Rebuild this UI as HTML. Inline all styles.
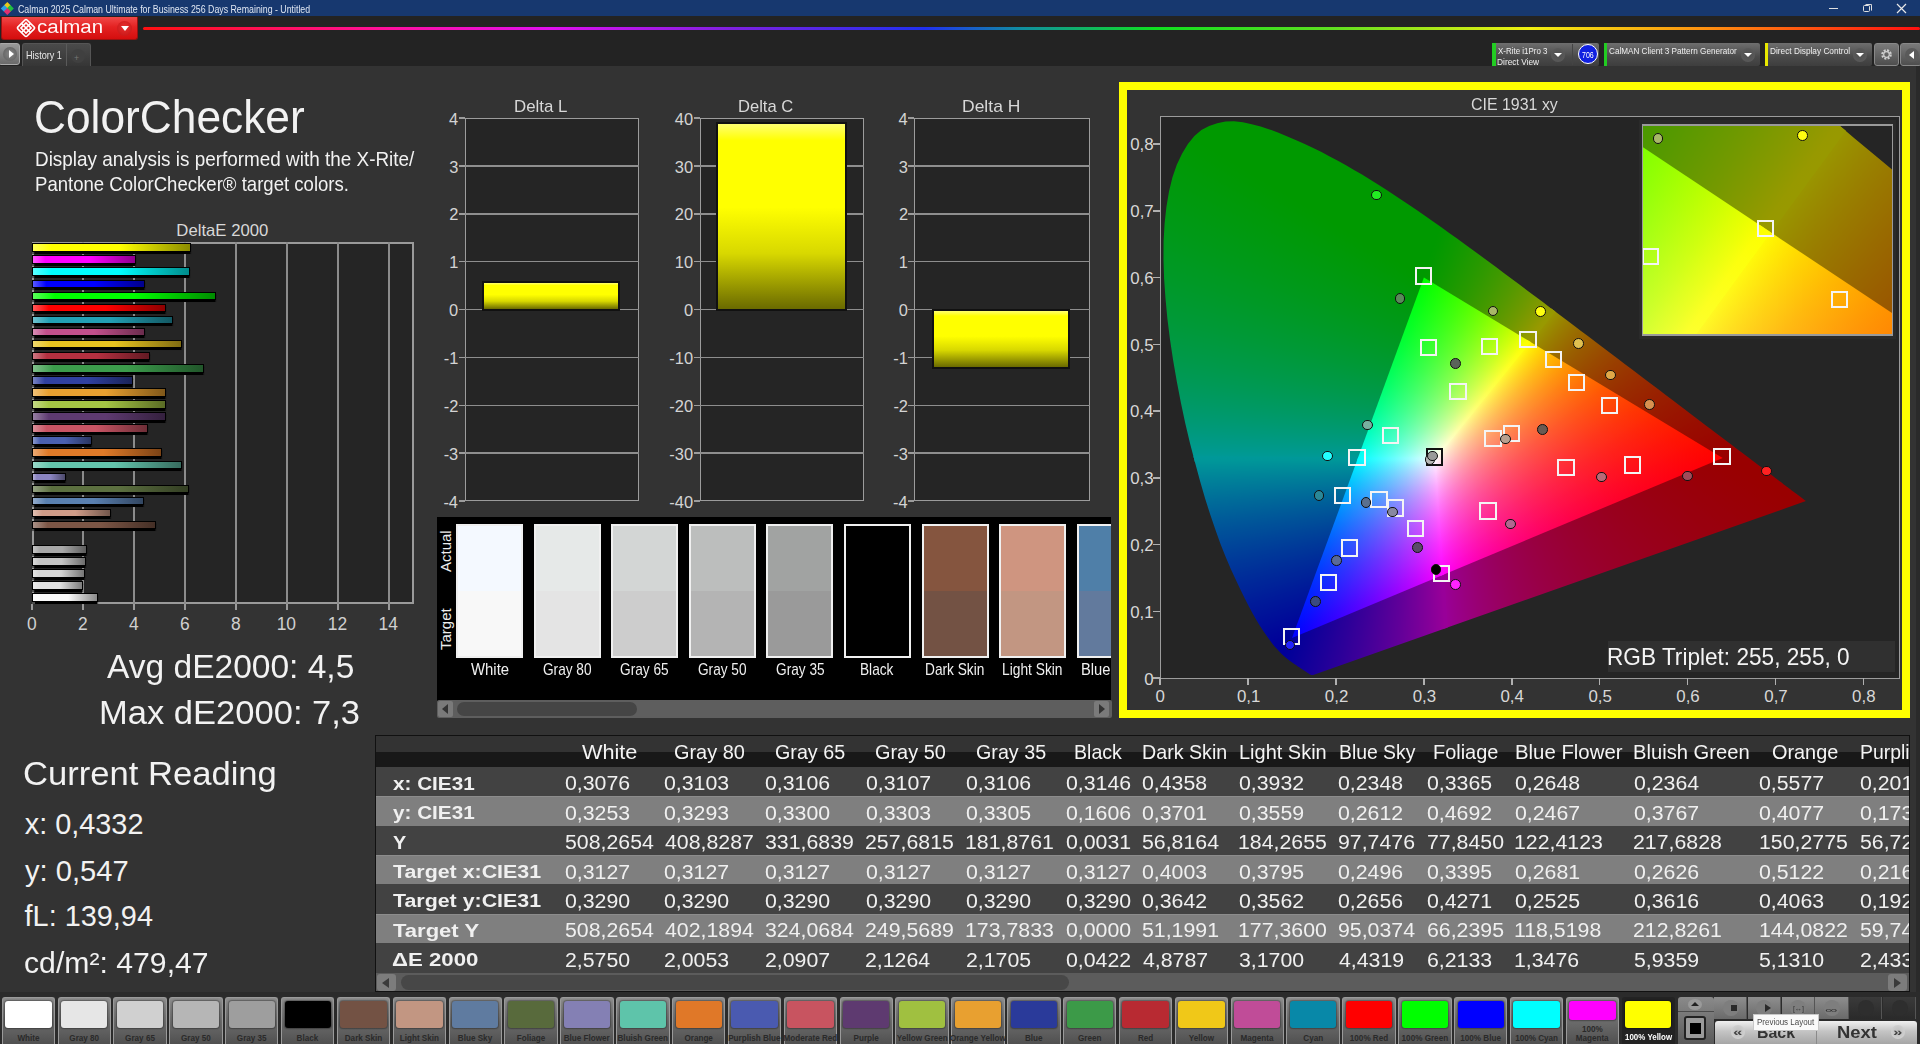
<!DOCTYPE html><html><head><meta charset="utf-8"><style>
*{margin:0;padding:0;box-sizing:border-box}
html,body{width:1920px;height:1044px;overflow:hidden;background:#333;font-family:"Liberation Sans",sans-serif}
.t{position:absolute;white-space:nowrap;line-height:1;transform-origin:0 0}
.a{position:absolute}
</style></head><body><div style="position:absolute;left:0px;top:0px;width:1920px;height:17px;background:#15386e"></div>
<div style="position:absolute;left:0px;top:16px;width:1920px;height:50px;background:#232323"></div>
<div style="position:absolute;left:0px;top:0px;width:1920px;height:16.3px;background:#17386f"></div>
<div class="a" style="left:1px;top:2px;width:12px;height:12px"><div class="a" style="left:3.7px;top:0.5px;width:4.6px;height:4.6px;background:#e8c81a;transform:rotate(45deg)"></div><div class="a" style="left:0.5px;top:3.7px;width:4.6px;height:4.6px;background:#2aa0e8;transform:rotate(45deg)"></div><div class="a" style="left:6.9px;top:3.7px;width:4.6px;height:4.6px;background:#20c040;transform:rotate(45deg)"></div><div class="a" style="left:3.7px;top:6.9px;width:4.6px;height:4.6px;background:#e03070;transform:rotate(45deg)"></div></div>
<div class="t" style="left:17.56px;top:4.61px;font-size:10.03px;color:#dfe6f2;transform:scaleX(0.8776);">Calman 2025 Calman Ultimate for Business 256 Days Remaining  - Untitled</div>
<div style="position:absolute;left:1829px;top:8px;width:9px;height:1px;background:#e0e0e0"></div>
<div style="position:absolute;left:1863px;top:5px;width:7px;height:7px;border:1px solid #e0e0e0;border-radius:1.5px"></div>
<div style="position:absolute;left:1865px;top:3.5px;width:7px;height:7px;border-top:1px solid #e0e0e0;border-right:1px solid #e0e0e0;border-radius:1.5px"></div>
<svg class="a" style="left:1896px;top:3px" width="11" height="11"><path d="M1 1L10 10M10 1L1 10" stroke="#e8e8e8" stroke-width="1.2"/></svg>
<div class="a" style="left:0.5px;top:16.7px;width:137px;height:23px;border-radius:0 0 3px 3px;background:linear-gradient(#f04848,#e42222 45%,#d40e0e);border:1px solid #9a1010;border-top:none"></div>
<svg class="a" style="left:16px;top:18px" width="20" height="20" viewBox="0 0 20 20"><g transform="rotate(45 10 10)" fill="none" stroke="#fff" stroke-width="1.6"><rect x="3.6" y="3.6" width="12.8" height="12.8" rx="1.5"/><rect x="6.4" y="6.4" width="7.2" height="7.2"/><line x1="10" y1="3.6" x2="10" y2="16.4"/><line x1="3.6" y1="10" x2="16.4" y2="10"/></g></svg>
<div class="t" style="left:36.68px;top:17.26px;font-size:19.19px;color:#fff8f8;transform:scaleX(1.0674);">calman</div>
<div class="a" style="left:117px;top:21px;width:15px;height:15px;border-radius:50%;background:radial-gradient(circle at 50% 40%,#e83030,#c21212)"></div>
<div class="a" style="left:120.5px;top:26px;width:0;height:0;border-left:4px solid transparent;border-right:4px solid transparent;border-top:5px solid #fff"></div>
<div class="a" style="left:143px;top:26.5px;width:1777px;height:3.6px;border-radius:2px;background:linear-gradient(to right,#ff1010 0,#ff10a0 14%,#e010f0 23%,#8020e0 33%,#2030f0 44%,#1090a0 49.5%,#10e020 57%,#60e020 67%,#f0f010 78%,#ff9010 88%,#ff1010 100%)"></div>
<div class="a" style="left:-2px;top:43px;width:22px;height:22px;border-radius:3px;background:linear-gradient(#9a9a9a,#6a6a6a);border:1px solid #aaa"></div>
<div class="a" style="left:3px;top:46.5px;width:14px;height:14px;border-radius:50%;background:radial-gradient(#888,#5a5a5a)"></div>
<div class="a" style="left:8.5px;top:49.5px;width:0;height:0;border-top:4px solid transparent;border-bottom:4px solid transparent;border-left:5px solid #fff"></div>
<div class="a" style="left:22px;top:43px;width:69px;height:23px;border-radius:3px 3px 0 0;background:linear-gradient(#4a4a4a,#363636);border:1px solid #555;border-bottom:none"></div>
<div style="position:absolute;left:65.5px;top:44px;width:1px;height:22px;background:#5a5a5a"></div>
<div class="t" style="left:25.97px;top:51.16px;font-size:10.03px;color:#e8e8e8;transform:scaleX(0.9084);">History 1</div>
<div class="a" style="left:71px;top:49px;width:14px;height:14px;border-radius:50%;background:#404040"></div>
<div class="t" style="left:74.06px;top:54.02px;font-size:8.72px;color:#777;">+</div>
<div class="a" style="left:1492px;top:43.3px;width:107px;height:22.5px;border-radius:2px;background:linear-gradient(#6e6e6e,#4a4a4a 60%,#3e3e3e)"></div>
<div style="position:absolute;left:1492px;top:43.3px;width:3.5px;height:22.5px;background:#22cc22"></div>
<div class="t" style="left:1497.80px;top:46.28px;font-size:9.59px;color:#f0f0f0;transform:scaleX(0.8292);">X-Rite i1Pro 3</div>
<div class="t" style="left:1497.33px;top:56.58px;font-size:9.59px;color:#f0f0f0;transform:scaleX(0.8722);">Direct View</div>
<div class="a" style="left:1551px;top:48px;width:14px;height:14px;border-radius:50%;background:radial-gradient(#4e4e4e,#5e5e5e)"></div>
<div class="a" style="left:1554px;top:53px;width:0;height:0;border-left:4px solid transparent;border-right:4px solid transparent;border-top:4.5px solid #fff"></div>
<div style="position:absolute;left:1572px;top:44px;width:1px;height:21px;background:#444"></div>
<div class="a" style="left:1577.5px;top:44px;width:20px;height:20px;border-radius:50%;background:#1020e0;border:1.2px solid #fff"></div>
<div class="t" style="left:1581.65px;top:50.72px;font-size:8.72px;color:#fff;transform:scaleX(0.8008);">706</div>
<div class="a" style="left:1603.7px;top:43.3px;width:156.29999999999995px;height:22.5px;border-radius:2px;background:linear-gradient(#6e6e6e,#4a4a4a 60%,#3e3e3e)"></div>
<div style="position:absolute;left:1603.7px;top:43.3px;width:3.5px;height:22.5px;background:#22cc22"></div>
<div class="t" style="left:1609.29px;top:46.28px;font-size:9.59px;color:#f0f0f0;transform:scaleX(0.8514);">CalMAN Client 3 Pattern Generator</div>
<div class="a" style="left:1741px;top:48px;width:14px;height:14px;border-radius:50%;background:radial-gradient(#4e4e4e,#5e5e5e)"></div>
<div class="a" style="left:1744px;top:53px;width:0;height:0;border-left:4px solid transparent;border-right:4px solid transparent;border-top:4.5px solid #fff"></div>
<div class="a" style="left:1764.6px;top:43.3px;width:107.20000000000005px;height:22.5px;border-radius:2px;background:linear-gradient(#6e6e6e,#4a4a4a 60%,#3e3e3e)"></div>
<div style="position:absolute;left:1764.6px;top:43.3px;width:3.5px;height:22.5px;background:#e8e800"></div>
<div class="t" style="left:1769.94px;top:46.28px;font-size:9.59px;color:#f0f0f0;transform:scaleX(0.8646);">Direct Display Control</div>
<div class="a" style="left:1853px;top:48px;width:14px;height:14px;border-radius:50%;background:radial-gradient(#4e4e4e,#5e5e5e)"></div>
<div class="a" style="left:1856px;top:53px;width:0;height:0;border-left:4px solid transparent;border-right:4px solid transparent;border-top:4.5px solid #fff"></div>
<div class="a" style="left:1874px;top:43.3px;width:25px;height:22.5px;border-radius:3px;background:linear-gradient(#7a7a7a,#4e4e4e);border:1px solid #888"></div>
<svg class="a" style="left:1879px;top:47px" width="15" height="15" viewBox="0 0 15 15"><circle cx="7.5" cy="7.5" r="4.2" fill="none" stroke="#cfcfcf" stroke-width="2.2" stroke-dasharray="2 1.3"/><circle cx="7.5" cy="7.5" r="2.8" fill="none" stroke="#cfcfcf" stroke-width="1.2"/></svg>
<div class="a" style="left:1900px;top:43.3px;width:22px;height:22.5px;border-radius:3px;background:linear-gradient(#7a7a7a,#4e4e4e);border:1px solid #888"></div>
<div class="a" style="left:1905px;top:47.5px;width:14px;height:14px;border-radius:50%;background:#5a5a5a"></div>
<div class="a" style="left:1909px;top:50.5px;width:0;height:0;border-top:4px solid transparent;border-bottom:4px solid transparent;border-right:5px solid #fff"></div>
<div style="position:absolute;left:0px;top:66px;width:1920px;height:928px;background:#333"></div>
<div class="t" style="left:33.79px;top:93.83px;font-size:46.51px;color:#f2f2f2;transform:scaleX(0.9524);">ColorChecker</div>
<div class="t" style="left:35.49px;top:150.21px;font-size:19.48px;color:#f2f2f2;transform:scaleX(0.9711);">Display analysis is performed with the X-Rite/</div>
<div class="t" style="left:34.51px;top:174.91px;font-size:19.48px;color:#f2f2f2;transform:scaleX(0.9536);">Pantone ColorChecker® target colors.</div>
<div class="t" style="left:176.36px;top:223.05px;font-size:16.72px;color:#d8d8d8;">DeltaE 2000</div>
<div style="position:absolute;left:32px;top:242px;width:382px;height:362px;background:#252525;border:2px solid #9a9a9a;border-bottom:2px solid #9a9a9a"></div>
<div style="position:absolute;left:82px;top:242px;width:2px;height:362px;background:#8c8c8c"></div>
<div style="position:absolute;left:133px;top:242px;width:2px;height:362px;background:#8c8c8c"></div>
<div style="position:absolute;left:184px;top:242px;width:2px;height:362px;background:#8c8c8c"></div>
<div style="position:absolute;left:235px;top:242px;width:2px;height:362px;background:#8c8c8c"></div>
<div style="position:absolute;left:286px;top:242px;width:2px;height:362px;background:#8c8c8c"></div>
<div style="position:absolute;left:337px;top:242px;width:2px;height:362px;background:#8c8c8c"></div>
<div style="position:absolute;left:388px;top:242px;width:2px;height:362px;background:#8c8c8c"></div>
<div style="position:absolute;left:31px;top:604px;width:2px;height:6px;background:#9a9a9a"></div>
<div class="t" style="left:27.12px;top:615.65px;font-size:17.43px;color:#d0d0d0;">0</div>
<div style="position:absolute;left:82px;top:604px;width:2px;height:6px;background:#9a9a9a"></div>
<div class="t" style="left:78.10px;top:615.65px;font-size:17.43px;color:#d0d0d0;">2</div>
<div style="position:absolute;left:133px;top:604px;width:2px;height:6px;background:#9a9a9a"></div>
<div class="t" style="left:129.09px;top:615.65px;font-size:17.43px;color:#d0d0d0;">4</div>
<div style="position:absolute;left:184px;top:604px;width:2px;height:6px;background:#9a9a9a"></div>
<div class="t" style="left:179.90px;top:615.65px;font-size:17.43px;color:#d0d0d0;">6</div>
<div style="position:absolute;left:235px;top:604px;width:2px;height:6px;background:#9a9a9a"></div>
<div class="t" style="left:230.92px;top:615.65px;font-size:17.43px;color:#d0d0d0;">8</div>
<div style="position:absolute;left:286px;top:604px;width:2px;height:6px;background:#9a9a9a"></div>
<div class="t" style="left:276.68px;top:615.65px;font-size:17.43px;color:#d0d0d0;">10</div>
<div style="position:absolute;left:337px;top:604px;width:2px;height:6px;background:#9a9a9a"></div>
<div class="t" style="left:327.75px;top:615.65px;font-size:17.43px;color:#d0d0d0;">12</div>
<div style="position:absolute;left:388px;top:604px;width:2px;height:6px;background:#9a9a9a"></div>
<div class="t" style="left:378.47px;top:615.65px;font-size:17.43px;color:#d0d0d0;">14</div>
<div class="a" style="left:32px;top:243.30px;width:159.4px;height:8.5px;border:1px solid #000;background:linear-gradient(to right,#ffff59,#ffff00 12%,#ffff00 55%,#8c8c00);box-shadow:0 1.5px 1px #000"></div>
<div class="a" style="left:32px;top:255.37px;width:104.2px;height:8.5px;border:1px solid #000;background:linear-gradient(to right,#ff59ff,#ff00ff 12%,#ff00ff 55%,#8c008c);box-shadow:0 1.5px 1px #000"></div>
<div class="a" style="left:32px;top:267.44px;width:157.9px;height:8.5px;border:1px solid #000;background:linear-gradient(to right,#59ffff,#00ffff 12%,#00ffff 55%,#008c8c);box-shadow:0 1.5px 1px #000"></div>
<div class="a" style="left:32px;top:279.51px;width:113.3px;height:8.5px;border:1px solid #000;background:linear-gradient(to right,#5959ff,#0000ff 12%,#0000ff 55%,#00008c);box-shadow:0 1.5px 1px #000"></div>
<div class="a" style="left:32px;top:291.58px;width:184.4px;height:8.5px;border:1px solid #000;background:linear-gradient(to right,#59ff59,#00ff00 12%,#00ff00 55%,#008c00);box-shadow:0 1.5px 1px #000"></div>
<div class="a" style="left:32px;top:303.65px;width:133.5px;height:8.5px;border:1px solid #000;background:linear-gradient(to right,#ff5959,#ff0000 12%,#ff0000 55%,#8c0000);box-shadow:0 1.5px 1px #000"></div>
<div class="a" style="left:32px;top:315.72px;width:141.4px;height:8.5px;border:1px solid #000;background:linear-gradient(to right,#6fc1ce,#22a0b4 12%,#22a0b4 55%,#135863);box-shadow:0 1.5px 1px #000"></div>
<div class="a" style="left:32px;top:327.79px;width:113.3px;height:8.5px;border:1px solid #000;background:linear-gradient(to right,#d78db4,#c2508c 12%,#c2508c 55%,#6b2c4d);box-shadow:0 1.5px 1px #000"></div>
<div class="a" style="left:32px;top:339.86px;width:150.3px;height:8.5px;border:1px solid #000;background:linear-gradient(to right,#f0d96e,#e8c420 12%,#e8c420 55%,#806c12);box-shadow:0 1.5px 1px #000"></div>
<div class="a" style="left:32px;top:351.93px;width:118.4px;height:8.5px;border:1px solid #000;background:linear-gradient(to right,#ce7883,#b43040 12%,#b43040 55%,#631a23);box-shadow:0 1.5px 1px #000"></div>
<div class="a" style="left:32px;top:364.00px;width:172.4px;height:8.5px;border:1px solid #000;background:linear-gradient(to right,#80bf8b,#3c9c4c 12%,#3c9c4c 55%,#21562a);box-shadow:0 1.5px 1px #000"></div>
<div class="a" style="left:32px;top:376.07px;width:100.6px;height:8.5px;border:1px solid #000;background:linear-gradient(to right,#7883c1,#3040a0 12%,#3040a0 55%,#1a2358);box-shadow:0 1.5px 1px #000"></div>
<div class="a" style="left:32px;top:388.14px;width:133.7px;height:8.5px;border:1px solid #000;background:linear-gradient(to right,#f0c178,#e8a030 12%,#e8a030 55%,#80581a);box-shadow:0 1.5px 1px #000"></div>
<div class="a" style="left:32px;top:400.21px;width:133.7px;height:8.5px;border:1px solid #000;background:linear-gradient(to right,#c4d985,#a4c444 12%,#a4c444 55%,#5a6c25);box-shadow:0 1.5px 1px #000"></div>
<div class="a" style="left:32px;top:412.28px;width:134.0px;height:8.5px;border:1px solid #000;background:linear-gradient(to right,#967fa2,#5e3a70 12%,#5e3a70 55%,#34203e);box-shadow:0 1.5px 1px #000"></div>
<div class="a" style="left:32px;top:424.35px;width:116.4px;height:8.5px;border:1px solid #000;background:linear-gradient(to right,#db909a,#c85464 12%,#c85464 55%,#6e2e37);box-shadow:0 1.5px 1px #000"></div>
<div class="a" style="left:32px;top:436.42px;width:60.4px;height:8.5px;border:1px solid #000;background:linear-gradient(to right,#8998cc,#4a60b0 12%,#4a60b0 55%,#293561);box-shadow:0 1.5px 1px #000"></div>
<div class="a" style="left:32px;top:448.49px;width:130.4px;height:8.5px;border:1px solid #000;background:linear-gradient(to right,#eba973,#e07a28 12%,#e07a28 55%,#7b4316);box-shadow:0 1.5px 1px #000"></div>
<div class="a" style="left:32px;top:460.56px;width:150.3px;height:8.5px;border:1px solid #000;background:linear-gradient(to right,#9ad9c9,#64c4ac 12%,#64c4ac 55%,#376c5f);box-shadow:0 1.5px 1px #000"></div>
<div class="a" style="left:32px;top:472.63px;width:34.1px;height:8.5px;border:1px solid #000;background:linear-gradient(to right,#b3afd6,#8a84c0 12%,#8a84c0 55%,#4c496a);box-shadow:0 1.5px 1px #000"></div>
<div class="a" style="left:32px;top:484.70px;width:156.6px;height:8.5px;border:1px solid #000;background:linear-gradient(to right,#95a283,#5c7040 12%,#5c7040 55%,#333e23);box-shadow:0 1.5px 1px #000"></div>
<div class="a" style="left:32px;top:496.77px;width:111.8px;height:8.5px;border:1px solid #000;background:linear-gradient(to right,#94accc,#5a80b0 12%,#5a80b0 55%,#324661);box-shadow:0 1.5px 1px #000"></div>
<div class="a" style="left:32px;top:508.84px;width:79.0px;height:8.5px;border:1px solid #000;background:linear-gradient(to right,#e0bfb2,#d09c88 12%,#d09c88 55%,#72564b);box-shadow:0 1.5px 1px #000"></div>
<div class="a" style="left:32px;top:520.91px;width:124.3px;height:8.5px;border:1px solid #000;background:linear-gradient(to right,#aa9187,#7c5646 12%,#7c5646 55%,#442f26);box-shadow:0 1.5px 1px #000"></div>
<div class="a" style="left:32px;top:545.05px;width:55.3px;height:8.5px;border:1px solid #000;background:linear-gradient(to right,#c6c6c6,#a8a8a8 12%,#a8a8a8 55%,#5c5c5c);box-shadow:0 1.5px 1px #000"></div>
<div class="a" style="left:32px;top:557.12px;width:54.3px;height:8.5px;border:1px solid #000;background:linear-gradient(to right,#d9d9d9,#c4c4c4 12%,#c4c4c4 55%,#6c6c6c);box-shadow:0 1.5px 1px #000"></div>
<div class="a" style="left:32px;top:569.19px;width:53.2px;height:8.5px;border:1px solid #000;background:linear-gradient(to right,#e3e3e3,#d4d4d4 12%,#d4d4d4 55%,#757575);box-shadow:0 1.5px 1px #000"></div>
<div class="a" style="left:32px;top:581.26px;width:51.2px;height:8.5px;border:1px solid #000;background:linear-gradient(to right,#ececec,#e2e2e2 12%,#e2e2e2 55%,#7c7c7c);box-shadow:0 1.5px 1px #000"></div>
<div class="a" style="left:32px;top:593.33px;width:65.6px;height:8.5px;border:1px solid #000;background:linear-gradient(to right,#fcfcfc,#fafafa 12%,#fafafa 55%,#8a8a8a);box-shadow:0 1.5px 1px #000"></div>
<div class="t" style="left:107.00px;top:649.77px;font-size:32.99px;color:#f2f2f2;transform:scaleX(1.0165);">Avg dE2000: 4,5</div>
<div class="t" style="left:99.24px;top:695.77px;font-size:32.99px;color:#f2f2f2;transform:scaleX(1.0469);">Max dE2000: 7,3</div>
<div class="t" style="left:23.27px;top:757.40px;font-size:33.43px;color:#f2f2f2;transform:scaleX(1.0351);">Current Reading</div>
<div class="t" style="left:24.71px;top:810.17px;font-size:28.86px;color:#f2f2f2;">x: 0,4332</div>
<div class="t" style="left:25.00px;top:856.63px;font-size:29.14px;color:#f2f2f2;">y: 0,547</div>
<div class="t" style="left:24.57px;top:902.27px;font-size:28.86px;color:#f2f2f2;">fL: 139,94</div>
<div class="t" style="left:23.79px;top:949.09px;font-size:28.71px;color:#f2f2f2;transform:scaleX(1.0520);">cd/m²: 479,47</div>
<div style="position:absolute;left:464.6px;top:118px;width:174.0px;height:383px;background:#252525;border:1.5px solid #9c9c9c"></div>
<div style="position:absolute;left:458.6px;top:117.25px;width:6px;height:1.5px;background:#9c9c9c"></div>
<div class="t" style="left:448.89px;top:110.74px;font-size:16.43px;color:#d4d4d4;">4</div>
<div style="position:absolute;left:464.6px;top:165.12px;width:174.0px;height:1.5px;background:#8e8e8e"></div>
<div style="position:absolute;left:458.6px;top:165.12px;width:6px;height:1.5px;background:#9c9c9c"></div>
<div class="t" style="left:449.14px;top:158.62px;font-size:16.43px;color:#d4d4d4;">3</div>
<div style="position:absolute;left:464.6px;top:213.0px;width:174.0px;height:1.5px;background:#8e8e8e"></div>
<div style="position:absolute;left:458.6px;top:213.0px;width:6px;height:1.5px;background:#9c9c9c"></div>
<div class="t" style="left:449.30px;top:206.49px;font-size:16.43px;color:#d4d4d4;">2</div>
<div style="position:absolute;left:464.6px;top:260.88px;width:174.0px;height:1.5px;background:#8e8e8e"></div>
<div style="position:absolute;left:458.6px;top:260.88px;width:6px;height:1.5px;background:#9c9c9c"></div>
<div class="t" style="left:449.22px;top:254.37px;font-size:16.43px;color:#d4d4d4;">1</div>
<div style="position:absolute;left:464.6px;top:308.75px;width:174.0px;height:1.5px;background:#8e8e8e"></div>
<div style="position:absolute;left:458.6px;top:308.75px;width:6px;height:1.5px;background:#9c9c9c"></div>
<div class="t" style="left:449.06px;top:302.24px;font-size:16.43px;color:#d4d4d4;">0</div>
<div style="position:absolute;left:464.6px;top:356.62px;width:174.0px;height:1.5px;background:#8e8e8e"></div>
<div style="position:absolute;left:458.6px;top:356.62px;width:6px;height:1.5px;background:#9c9c9c"></div>
<div class="t" style="left:443.72px;top:350.12px;font-size:16.43px;color:#d4d4d4;">-1</div>
<div style="position:absolute;left:464.6px;top:404.5px;width:174.0px;height:1.5px;background:#8e8e8e"></div>
<div style="position:absolute;left:458.6px;top:404.5px;width:6px;height:1.5px;background:#9c9c9c"></div>
<div class="t" style="left:443.80px;top:397.99px;font-size:16.43px;color:#d4d4d4;">-2</div>
<div style="position:absolute;left:464.6px;top:452.38px;width:174.0px;height:1.5px;background:#8e8e8e"></div>
<div style="position:absolute;left:458.6px;top:452.38px;width:6px;height:1.5px;background:#9c9c9c"></div>
<div class="t" style="left:443.64px;top:445.87px;font-size:16.43px;color:#d4d4d4;">-3</div>
<div style="position:absolute;left:458.6px;top:500.25px;width:6px;height:1.5px;background:#9c9c9c"></div>
<div class="t" style="left:443.39px;top:493.74px;font-size:16.43px;color:#d4d4d4;">-4</div>
<div class="a" style="left:481.5px;top:280.5px;width:138.5px;height:30.5px;border:2px solid #111;background:linear-gradient(to bottom,#ffff70,#ffff00 9%,#ffff00 45%,#d8d800 70%,#6a6a00)"></div>
<div class="t" style="left:514.15px;top:99.37px;font-size:15.99px;color:#d8d8d8;transform:scaleX(1.0544);">Delta L</div>
<div style="position:absolute;left:699.5px;top:118px;width:164.5px;height:383px;background:#252525;border:1.5px solid #9c9c9c"></div>
<div style="position:absolute;left:693.5px;top:117.25px;width:6px;height:1.5px;background:#9c9c9c"></div>
<div class="t" style="left:674.84px;top:110.74px;font-size:16.43px;color:#d4d4d4;">40</div>
<div style="position:absolute;left:699.5px;top:165.12px;width:164.5px;height:1.5px;background:#8e8e8e"></div>
<div style="position:absolute;left:693.5px;top:165.12px;width:6px;height:1.5px;background:#9c9c9c"></div>
<div class="t" style="left:674.84px;top:158.62px;font-size:16.43px;color:#d4d4d4;">30</div>
<div style="position:absolute;left:699.5px;top:213.0px;width:164.5px;height:1.5px;background:#8e8e8e"></div>
<div style="position:absolute;left:693.5px;top:213.0px;width:6px;height:1.5px;background:#9c9c9c"></div>
<div class="t" style="left:674.84px;top:206.49px;font-size:16.43px;color:#d4d4d4;">20</div>
<div style="position:absolute;left:699.5px;top:260.88px;width:164.5px;height:1.5px;background:#8e8e8e"></div>
<div style="position:absolute;left:693.5px;top:260.88px;width:6px;height:1.5px;background:#9c9c9c"></div>
<div class="t" style="left:674.84px;top:254.37px;font-size:16.43px;color:#d4d4d4;">10</div>
<div style="position:absolute;left:699.5px;top:308.75px;width:164.5px;height:1.5px;background:#8e8e8e"></div>
<div style="position:absolute;left:693.5px;top:308.75px;width:6px;height:1.5px;background:#9c9c9c"></div>
<div class="t" style="left:683.96px;top:302.24px;font-size:16.43px;color:#d4d4d4;">0</div>
<div style="position:absolute;left:699.5px;top:356.62px;width:164.5px;height:1.5px;background:#8e8e8e"></div>
<div style="position:absolute;left:693.5px;top:356.62px;width:6px;height:1.5px;background:#9c9c9c"></div>
<div class="t" style="left:669.34px;top:350.12px;font-size:16.43px;color:#d4d4d4;">-10</div>
<div style="position:absolute;left:699.5px;top:404.5px;width:164.5px;height:1.5px;background:#8e8e8e"></div>
<div style="position:absolute;left:693.5px;top:404.5px;width:6px;height:1.5px;background:#9c9c9c"></div>
<div class="t" style="left:669.34px;top:397.99px;font-size:16.43px;color:#d4d4d4;">-20</div>
<div style="position:absolute;left:699.5px;top:452.38px;width:164.5px;height:1.5px;background:#8e8e8e"></div>
<div style="position:absolute;left:693.5px;top:452.38px;width:6px;height:1.5px;background:#9c9c9c"></div>
<div class="t" style="left:669.34px;top:445.87px;font-size:16.43px;color:#d4d4d4;">-30</div>
<div style="position:absolute;left:693.5px;top:500.25px;width:6px;height:1.5px;background:#9c9c9c"></div>
<div class="t" style="left:669.34px;top:493.74px;font-size:16.43px;color:#d4d4d4;">-40</div>
<div class="a" style="left:715.6px;top:121.7px;width:131.10000000000002px;height:189.3px;border:2px solid #111;background:linear-gradient(to bottom,#ffff70,#ffff00 9%,#ffff00 45%,#d8d800 70%,#6a6a00)"></div>
<div class="t" style="left:738.47px;top:99.37px;font-size:15.99px;color:#d8d8d8;transform:scaleX(1.0369);">Delta C</div>
<div style="position:absolute;left:914.2px;top:118px;width:175.5999999999999px;height:383px;background:#252525;border:1.5px solid #9c9c9c"></div>
<div style="position:absolute;left:908.2px;top:117.25px;width:6px;height:1.5px;background:#9c9c9c"></div>
<div class="t" style="left:898.49px;top:110.74px;font-size:16.43px;color:#d4d4d4;">4</div>
<div style="position:absolute;left:914.2px;top:165.12px;width:175.5999999999999px;height:1.5px;background:#8e8e8e"></div>
<div style="position:absolute;left:908.2px;top:165.12px;width:6px;height:1.5px;background:#9c9c9c"></div>
<div class="t" style="left:898.74px;top:158.62px;font-size:16.43px;color:#d4d4d4;">3</div>
<div style="position:absolute;left:914.2px;top:213.0px;width:175.5999999999999px;height:1.5px;background:#8e8e8e"></div>
<div style="position:absolute;left:908.2px;top:213.0px;width:6px;height:1.5px;background:#9c9c9c"></div>
<div class="t" style="left:898.90px;top:206.49px;font-size:16.43px;color:#d4d4d4;">2</div>
<div style="position:absolute;left:914.2px;top:260.88px;width:175.5999999999999px;height:1.5px;background:#8e8e8e"></div>
<div style="position:absolute;left:908.2px;top:260.88px;width:6px;height:1.5px;background:#9c9c9c"></div>
<div class="t" style="left:898.82px;top:254.37px;font-size:16.43px;color:#d4d4d4;">1</div>
<div style="position:absolute;left:914.2px;top:308.75px;width:175.5999999999999px;height:1.5px;background:#8e8e8e"></div>
<div style="position:absolute;left:908.2px;top:308.75px;width:6px;height:1.5px;background:#9c9c9c"></div>
<div class="t" style="left:898.66px;top:302.24px;font-size:16.43px;color:#d4d4d4;">0</div>
<div style="position:absolute;left:914.2px;top:356.62px;width:175.5999999999999px;height:1.5px;background:#8e8e8e"></div>
<div style="position:absolute;left:908.2px;top:356.62px;width:6px;height:1.5px;background:#9c9c9c"></div>
<div class="t" style="left:893.32px;top:350.12px;font-size:16.43px;color:#d4d4d4;">-1</div>
<div style="position:absolute;left:914.2px;top:404.5px;width:175.5999999999999px;height:1.5px;background:#8e8e8e"></div>
<div style="position:absolute;left:908.2px;top:404.5px;width:6px;height:1.5px;background:#9c9c9c"></div>
<div class="t" style="left:893.40px;top:397.99px;font-size:16.43px;color:#d4d4d4;">-2</div>
<div style="position:absolute;left:914.2px;top:452.38px;width:175.5999999999999px;height:1.5px;background:#8e8e8e"></div>
<div style="position:absolute;left:908.2px;top:452.38px;width:6px;height:1.5px;background:#9c9c9c"></div>
<div class="t" style="left:893.24px;top:445.87px;font-size:16.43px;color:#d4d4d4;">-3</div>
<div style="position:absolute;left:908.2px;top:500.25px;width:6px;height:1.5px;background:#9c9c9c"></div>
<div class="t" style="left:892.99px;top:493.74px;font-size:16.43px;color:#d4d4d4;">-4</div>
<div class="a" style="left:931.5px;top:309px;width:138.0px;height:59.5px;border:2px solid #111;background:linear-gradient(to bottom,#ffff70,#ffff00 9%,#ffff00 45%,#d8d800 70%,#6a6a00)"></div>
<div class="t" style="left:962.10px;top:99.37px;font-size:15.99px;color:#d8d8d8;transform:scaleX(1.0950);">Delta H</div>
<div style="position:absolute;left:436.5px;top:516.5px;width:675px;height:184px;background:#000"></div>

<div class="t" style="left:438px;top:572px;font-size:15px;color:#eee;transform:rotate(-90deg);transform-origin:0 0">Actual</div>
<div class="t" style="left:438px;top:650px;font-size:15px;color:#eee;transform:rotate(-90deg);transform-origin:0 0">Target</div>
<div class="a" style="left:455.90px;top:523.7px;width:67px;height:134px;border:2px solid #f0f0f0;background:linear-gradient(#f4f9ff 50%,#f8f8f8 50%)"></div>
<div class="t" style="left:470.63px;top:662.21px;font-size:15.70px;color:#f0f0f0;transform:scaleX(0.9492);">White</div>
<div class="a" style="left:533.52px;top:523.7px;width:67px;height:134px;border:2px solid #f0f0f0;background:linear-gradient(#e6e9e8 50%,#e4e4e4 50%)"></div>
<div class="t" style="left:542.64px;top:662.21px;font-size:15.70px;color:#f0f0f0;transform:scaleX(0.8702);">Gray 80</div>
<div class="a" style="left:611.14px;top:523.7px;width:67px;height:134px;border:2px solid #f0f0f0;background:linear-gradient(#d3d6d5 50%,#cdcdcd 50%)"></div>
<div class="t" style="left:620.26px;top:662.21px;font-size:15.70px;color:#f0f0f0;transform:scaleX(0.8714);">Gray 65</div>
<div class="a" style="left:688.76px;top:523.7px;width:67px;height:134px;border:2px solid #f0f0f0;background:linear-gradient(#bcbebd 50%,#b4b4b4 50%)"></div>
<div class="t" style="left:697.88px;top:662.21px;font-size:15.70px;color:#f0f0f0;transform:scaleX(0.8702);">Gray 50</div>
<div class="a" style="left:766.38px;top:523.7px;width:67px;height:134px;border:2px solid #f0f0f0;background:linear-gradient(#a1a3a2 50%,#9a9a9a 50%)"></div>
<div class="t" style="left:775.50px;top:662.21px;font-size:15.70px;color:#f0f0f0;transform:scaleX(0.8714);">Gray 35</div>
<div class="a" style="left:844.00px;top:523.7px;width:67px;height:134px;border:2px solid #f0f0f0;background:linear-gradient(#000000 50%,#000000 50%)"></div>
<div class="t" style="left:860.26px;top:662.21px;font-size:15.70px;color:#f0f0f0;transform:scaleX(0.8700);">Black</div>
<div class="a" style="left:921.62px;top:523.7px;width:67px;height:134px;border:2px solid #f0f0f0;background:linear-gradient(#85553f 50%,#735244 50%)"></div>
<div class="t" style="left:925.27px;top:662.21px;font-size:15.70px;color:#f0f0f0;transform:scaleX(0.8732);">Dark Skin</div>
<div class="a" style="left:999.24px;top:523.7px;width:67px;height:134px;border:2px solid #f0f0f0;background:linear-gradient(#cf9580 50%,#c29682 50%)"></div>
<div class="t" style="left:1002.34px;top:662.21px;font-size:15.70px;color:#f0f0f0;transform:scaleX(0.8784);">Light Skin</div>
<div class="a" style="left:1076.86px;top:523.7px;width:67px;height:134px;border:2px solid #f0f0f0;background:linear-gradient(#4f7fa8 50%,#627a9d 50%)"></div>
<div class="t" style="left:1080.68px;top:662.21px;font-size:15.70px;color:#f0f0f0;transform:scaleX(0.9395);">Blue Sky</div>
<div style="position:absolute;left:1111px;top:516.5px;width:8px;height:184px;background:#333"></div>
<div style="position:absolute;left:436.5px;top:699.5px;width:675px;height:18.5px;background:#5e5e5e;border-radius:2px"></div>
<div style="position:absolute;left:457px;top:701.5px;width:180px;height:14px;background:#454545;border-radius:7px"></div>
<div style="position:absolute;left:438px;top:701px;width:15px;height:15.5px;background:#7a7a7a;border-radius:2px"></div>
<div class="a" style="left:442px;top:704px;width:0;height:0;border-top:5px solid transparent;border-bottom:5px solid transparent;border-right:6px solid #333"></div>
<div style="position:absolute;left:1094px;top:701px;width:15px;height:15.5px;background:#7a7a7a;border-radius:2px"></div>
<div class="a" style="left:1099px;top:704px;width:0;height:0;border-top:5px solid transparent;border-bottom:5px solid transparent;border-left:6px solid #333"></div>
<div style="position:absolute;left:1119px;top:82px;width:791px;height:636px;background:#ffff00"></div>
<div style="position:absolute;left:1127px;top:90px;width:775px;height:620px;background:#333"></div>
<div class="t" style="left:1470.80px;top:97.23px;font-size:16.86px;color:#d8d8d8;transform:scaleX(0.9454);">CIE 1931 xy</div>
<div style="position:absolute;left:1159.5px;top:115.5px;width:740px;height:563px;background:#252525;border:1.5px solid #9c9c9c"></div>
<div class="a" style="left:1160px;top:116px;width:738px;height:561px;overflow:hidden"><div class="a" style="left:0;top:0;width:740px;height:563px;background:conic-gradient(from 37.175deg at 132.04px 522.14px,#ffffff 0.00deg,#ffffff 0.74deg,#fffcff 1.48deg,#ffedff 2.22deg,#ffdfff 2.96deg,#ffd2ff 3.70deg,#ffc6ff 4.45deg,#ffbbff 5.19deg,#ffb0ff 5.93deg,#ffa6ff 6.67deg,#ff9cff 7.41deg,#ff93ff 8.15deg,#ff8bff 8.89deg,#ff83ff 9.63deg,#ff7bff 10.37deg,#ff74ff 11.11deg,#ff6dff 11.85deg,#ff66ff 12.59deg,#ff60ff 13.34deg,#ff5aff 14.08deg,#ff54ff 14.82deg,#ff4eff 15.56deg,#ff49ff 16.30deg,#ff44ff 17.04deg,#ff3fff 17.78deg,#ff3aff 18.52deg,#ff35ff 19.26deg,#ff31ff 20.00deg,#ff2dff 20.74deg,#ff28ff 21.49deg,#ff24ff 22.23deg,#ff20ff 22.97deg,#ff1dff 23.71deg,#ff19ff 24.45deg,#ff15ff 25.19deg,#ff12ff 25.93deg,#ff0fff 26.67deg,#ff0bff 27.41deg,#ff08ff 28.15deg,#ff05ff 28.89deg,#ff02ff 29.63deg,#ff00ff 30.38deg,#ff00ff 50.38deg,#ff00ff 360deg),conic-gradient(from 102.591deg at 263.87px 161.64px,#ffff00 0.00deg,#ffff00 18.63deg,#ffff02 19.38deg,#ffff04 20.12deg,#ffff05 20.87deg,#ffff07 21.61deg,#ffff09 22.36deg,#ffff0a 23.10deg,#ffff0c 23.85deg,#ffff0e 24.59deg,#ffff10 25.34deg,#ffff11 26.08deg,#ffff13 26.83deg,#ffff15 27.58deg,#ffff17 28.32deg,#ffff18 29.07deg,#ffff1a 29.81deg,#ffff1c 30.56deg,#ffff1e 31.30deg,#ffff20 32.05deg,#ffff22 32.79deg,#ffff24 33.54deg,#ffff26 34.28deg,#ffff28 35.03deg,#ffff2a 35.77deg,#ffff2c 36.52deg,#ffff2e 37.26deg,#ffff30 38.01deg,#ffff32 38.75deg,#ffff34 39.50deg,#ffff37 40.25deg,#ffff39 40.99deg,#ffff3b 41.74deg,#ffff3e 42.48deg,#ffff40 43.23deg,#ffff42 43.97deg,#ffff45 44.72deg,#ffff47 45.46deg,#ffff4a 46.21deg,#ffff4d 46.95deg,#ffff4f 47.70deg,#ffff52 48.44deg,#ffff55 49.19deg,#ffff58 49.93deg,#ffff5b 50.68deg,#ffff5e 51.42deg,#ffff61 52.17deg,#ffff64 52.92deg,#ffff67 53.66deg,#ffff6b 54.41deg,#ffff6e 55.15deg,#ffff72 55.90deg,#ffff75 56.64deg,#ffff79 57.39deg,#ffff7d 58.13deg,#ffff81 58.88deg,#ffff85 59.62deg,#ffff89 60.37deg,#ffff8e 61.11deg,#ffff92 61.86deg,#ffff97 62.60deg,#ffff9c 63.35deg,#ffffa1 64.09deg,#ffffa6 64.84deg,#ffffac 65.58deg,#ffffb2 66.33deg,#ffffb8 67.08deg,#ffffbe 67.82deg,#ffffc5 68.57deg,#ffffcc 69.31deg,#ffffd3 70.06deg,#ffffdb 70.80deg,#ffffe3 71.55deg,#ffffeb 72.29deg,#fffff4 73.04deg,#fffffe 73.78deg,#ffffff 74.53deg,#ffffff 75.27deg,#ffffff 360deg);background-blend-mode:multiply;clip-path:polygon(274.1px 342.3px,391.3px 192.4px,398.2px 197.7px,405.9px 203.5px,413.5px 209.2px,421.0px 214.9px,428.5px 220.6px,436.0px 226.2px,443.3px 231.8px,450.6px 237.3px,457.9px 242.8px,465.0px 248.2px,472.1px 253.6px,479.0px 258.8px,485.9px 264.0px,492.6px 269.1px,499.3px 274.1px,505.7px 279.0px,512.1px 283.8px,518.3px 288.5px,524.3px 293.1px,530.1px 297.5px,535.7px 301.7px,541.0px 305.8px,546.2px 309.7px,551.3px 313.5px,556.2px 317.2px,560.9px 320.8px,565.5px 324.3px,569.9px 327.6px,574.1px 330.7px,578.0px 333.7px,581.8px 336.5px,585.4px 339.2px,588.8px 341.8px,592.0px 344.2px,595.0px 346.6px,597.9px 348.8px,600.7px 350.8px,603.2px 352.8px,605.7px 354.6px,608.0px 356.4px,610.1px 358.0px,612.2px 359.6px,614.1px 361.0px,616.0px 362.4px,617.7px 363.7px,619.3px 364.9px,620.9px 366.1px,622.4px 367.3px,623.8px 368.4px,625.2px 369.4px,626.5px 370.4px,627.7px 371.3px,628.9px 372.2px,630.0px 373.1px,631.1px 373.9px,632.1px 374.7px,633.1px 375.4px,634.0px 376.1px,634.8px 376.7px,635.6px 377.3px,636.2px 377.7px,636.7px 378.1px,637.3px 378.5px,638.3px 379.3px,640.0px 380.6px,642.3px 382.3px,644.4px 384.0px,645.9px 385.1px,283.1px 513.0px);filter:brightness(0.6);"></div>
<div class="a" style="left:0;top:0;width:740px;height:563px;background:conic-gradient(from -29.895deg at 132.04px 522.14px,#00ffff 0.00deg,#00ffff 49.73deg,#05ffff 50.48deg,#0cffff 51.22deg,#13ffff 51.96deg,#1affff 52.70deg,#22ffff 53.44deg,#2affff 54.19deg,#32ffff 54.93deg,#3affff 55.67deg,#42ffff 56.41deg,#4bffff 57.16deg,#54ffff 57.90deg,#5effff 58.64deg,#67ffff 59.38deg,#71ffff 60.12deg,#7cffff 60.87deg,#86ffff 61.61deg,#91ffff 62.35deg,#9dffff 63.09deg,#a9ffff 63.84deg,#b5ffff 64.58deg,#c2ffff 65.32deg,#d0ffff 66.06deg,#deffff 66.81deg,#edffff 67.55deg,#fcffff 68.29deg,#ffffff 69.03deg,#ffffff 69.77deg,#ffffff 360deg),conic-gradient(from -91.459deg at 562.70px 341.89px,#ffffff 0.00deg,#ffffff 0.74deg,#fffffc 1.48deg,#ffffef 2.22deg,#ffffe3 2.96deg,#ffffd8 3.70deg,#ffffcd 4.44deg,#ffffc3 5.18deg,#ffffb9 5.92deg,#ffffb0 6.66deg,#ffffa7 7.40deg,#ffff9f 8.14deg,#ffff97 8.87deg,#ffff8f 9.61deg,#ffff88 10.35deg,#ffff81 11.09deg,#ffff7a 11.83deg,#ffff74 12.57deg,#ffff6e 13.31deg,#ffff68 14.05deg,#ffff62 14.79deg,#ffff5c 15.53deg,#ffff57 16.27deg,#ffff52 17.01deg,#ffff4d 17.75deg,#ffff48 18.49deg,#ffff43 19.23deg,#ffff3e 19.97deg,#ffff3a 20.71deg,#ffff36 21.45deg,#ffff31 22.19deg,#ffff2d 22.93deg,#ffff29 23.67deg,#ffff25 24.41deg,#ffff22 25.15deg,#ffff1e 25.88deg,#ffff1a 26.62deg,#ffff17 27.36deg,#ffff13 28.10deg,#ffff10 28.84deg,#ffff0d 29.58deg,#ffff09 30.32deg,#ffff06 31.06deg,#ffff03 31.80deg,#ffff00 32.54deg,#ffff00 43.63deg,#ffff00 360deg);background-blend-mode:multiply;clip-path:polygon(34.9px 346.1px,30.0px 327.3px,25.2px 307.1px,20.9px 286.7px,16.9px 265.9px,13.2px 244.7px,10.0px 223.4px,7.4px 202.8px,5.5px 182.6px,4.1px 162.6px,3.5px 143.4px,3.6px 125.1px,4.6px 107.6px,6.4px 90.9px,9.0px 75.4px,12.4px 61.4px,16.8px 48.8px,22.0px 37.7px,27.9px 28.0px,34.4px 20.1px,41.4px 14.1px,49.1px 9.9px,57.2px 7.2px,65.5px 5.6px,74.0px 5.2px,82.8px 6.3px,91.7px 8.3px,100.6px 10.6px,109.5px 13.4px,118.5px 16.7px,127.4px 20.4px,136.2px 24.2px,144.7px 28.0px,153.2px 32.0px,161.5px 36.1px,169.7px 40.4px,177.9px 44.8px,186.0px 49.3px,194.0px 53.9px,202.0px 58.6px,210.0px 63.5px,218.0px 68.4px,225.9px 73.5px,233.8px 78.7px,241.7px 83.9px,249.6px 89.2px,257.4px 94.6px,265.3px 100.0px,273.1px 105.5px,281.0px 111.1px,288.8px 116.7px,296.7px 122.3px,304.5px 128.0px,312.4px 133.7px,320.3px 139.5px,328.1px 145.3px,336.0px 151.1px,343.8px 156.9px,351.6px 162.8px,359.4px 168.6px,367.2px 174.4px,375.0px 180.2px,382.8px 186.1px,390.5px 191.9px,395.4px 195.5px,275.5px 343.5px);filter:brightness(0.6);"></div>
<div class="a" style="left:0;top:0;width:740px;height:563px;background:conic-gradient(from -184.892deg at 263.87px 161.64px,#ffffff 0.00deg,#ffffff 0.75deg,#fdffff 1.49deg,#f3ffff 2.24deg,#eaffff 2.98deg,#e0ffff 3.73deg,#d7ffff 4.47deg,#ceffff 5.22deg,#c5ffff 5.96deg,#bcffff 6.71deg,#b4ffff 7.45deg,#abffff 8.20deg,#a2ffff 8.94deg,#9affff 9.69deg,#92ffff 10.43deg,#8affff 11.18deg,#82ffff 11.92deg,#7affff 12.67deg,#72ffff 13.41deg,#6affff 14.16deg,#62ffff 14.90deg,#5bffff 15.65deg,#53ffff 16.39deg,#4bffff 17.14deg,#44ffff 17.88deg,#3dffff 18.63deg,#35ffff 19.37deg,#2effff 20.12deg,#27ffff 20.86deg,#20ffff 21.61deg,#19ffff 22.35deg,#12ffff 23.10deg,#0bffff 23.84deg,#04ffff 24.59deg,#00ffff 25.33deg,#00ffff 58.11deg,#00ffff 360deg),conic-gradient(from -122.653deg at 562.70px 341.89px,#ff00ff 0.00deg,#ff00ff 9.56deg,#ff03ff 10.30deg,#ff08ff 11.03deg,#ff0eff 11.77deg,#ff14ff 12.50deg,#ff1aff 13.24deg,#ff20ff 13.97deg,#ff26ff 14.71deg,#ff2cff 15.44deg,#ff33ff 16.18deg,#ff3aff 16.91deg,#ff40ff 17.65deg,#ff47ff 18.38deg,#ff4eff 19.12deg,#ff56ff 19.86deg,#ff5dff 20.59deg,#ff65ff 21.33deg,#ff6dff 22.06deg,#ff75ff 22.80deg,#ff7eff 23.53deg,#ff86ff 24.27deg,#ff8fff 25.00deg,#ff98ff 25.74deg,#ffa2ff 26.47deg,#ffacff 27.21deg,#ffb6ff 27.94deg,#ffc1ff 28.68deg,#ffccff 29.42deg,#ffd7ff 30.15deg,#ffe3ff 30.89deg,#ffefff 31.62deg,#fffcff 32.36deg,#ffffff 33.09deg,#ffffff 33.83deg,#ffffff 360deg);background-blend-mode:multiply;clip-path:polygon(153.2px 558.9px,153.2px 558.9px,153.1px 558.9px,153.0px 558.9px,153.0px 558.9px,152.9px 558.9px,152.8px 559.0px,152.6px 559.0px,152.5px 559.0px,152.4px 559.0px,152.2px 559.0px,152.1px 559.0px,151.9px 559.0px,151.7px 559.0px,151.4px 558.9px,151.1px 558.9px,150.8px 558.8px,150.6px 558.7px,150.4px 558.6px,150.1px 558.5px,149.9px 558.3px,149.6px 558.2px,149.3px 558.0px,149.0px 557.8px,148.6px 557.6px,148.3px 557.3px,147.8px 557.1px,147.4px 556.8px,146.9px 556.5px,146.4px 556.1px,145.9px 555.7px,145.3px 555.3px,144.7px 554.9px,144.0px 554.5px,143.4px 554.0px,142.6px 553.5px,141.8px 553.0px,140.9px 552.4px,139.9px 551.8px,138.9px 551.1px,137.8px 550.4px,136.7px 549.6px,135.5px 548.8px,134.3px 548.0px,132.9px 547.0px,131.5px 546.0px,130.0px 544.9px,128.4px 543.7px,126.8px 542.4px,125.0px 540.9px,123.3px 539.4px,121.4px 537.7px,119.3px 535.6px,117.0px 533.1px,114.6px 530.4px,112.0px 527.2px,109.3px 523.6px,106.4px 519.6px,103.3px 515.1px,100.0px 510.1px,96.5px 504.3px,92.8px 497.7px,88.9px 490.6px,84.8px 482.6px,80.4px 473.6px,75.8px 463.7px,70.8px 452.9px,65.7px 441.1px,60.6px 428.2px,55.5px 414.1px,50.3px 398.8px,45.1px 382.5px,40.1px 365.3px,35.1px 346.8px,33.4px 340.3px,275.7px 341.8px,287.7px 511.4px);filter:brightness(0.6);"></div>
<div class="a" style="left:0;top:0;width:740px;height:563px;background:conic-gradient(from 37.190deg at 132.04px 522.14px,#ffffff 0.00deg,#ffffff 0.74deg,#fffcff 1.48deg,#ffedff 2.22deg,#ffdfff 2.96deg,#ffd2ff 3.70deg,#ffc6ff 4.44deg,#ffbaff 5.18deg,#ffb0ff 5.92deg,#ffa6ff 6.66deg,#ff9cff 7.40deg,#ff93ff 8.14deg,#ff8bff 8.89deg,#ff82ff 9.63deg,#ff7bff 10.37deg,#ff73ff 11.11deg,#ff6dff 11.85deg,#ff66ff 12.59deg,#ff60ff 13.33deg,#ff59ff 14.07deg,#ff54ff 14.81deg,#ff4eff 15.55deg,#ff49ff 16.29deg,#ff44ff 17.03deg,#ff3fff 17.77deg,#ff3aff 18.51deg,#ff35ff 19.25deg,#ff31ff 19.99deg,#ff2dff 20.73deg,#ff28ff 21.47deg,#ff24ff 22.21deg,#ff20ff 22.95deg,#ff1dff 23.69deg,#ff19ff 24.43deg,#ff15ff 25.17deg,#ff12ff 25.92deg,#ff0fff 26.66deg,#ff0bff 27.40deg,#ff08ff 28.14deg,#ff05ff 28.88deg,#ff02ff 29.62deg,#ff00ff 30.36deg,#ff00ff 31.10deg,#ff00ff 360deg),conic-gradient(from 120.098deg at 263.87px 161.64px,#ffff00 0.00deg,#ffff00 0.75deg,#ffff01 1.50deg,#ffff03 2.25deg,#ffff04 3.00deg,#ffff06 3.75deg,#ffff08 4.50deg,#ffff0a 5.25deg,#ffff0b 6.00deg,#ffff0d 6.75deg,#ffff0f 7.50deg,#ffff11 8.25deg,#ffff12 9.00deg,#ffff14 9.75deg,#ffff16 10.50deg,#ffff18 11.25deg,#ffff1a 12.00deg,#ffff1b 12.75deg,#ffff1d 13.50deg,#ffff1f 14.25deg,#ffff21 15.00deg,#ffff23 15.75deg,#ffff25 16.50deg,#ffff27 17.25deg,#ffff29 18.00deg,#ffff2b 18.75deg,#ffff2d 19.50deg,#ffff2f 20.25deg,#ffff32 21.00deg,#ffff34 21.75deg,#ffff36 22.50deg,#ffff38 23.25deg,#ffff3b 24.00deg,#ffff3d 24.75deg,#ffff3f 25.50deg,#ffff42 26.25deg,#ffff44 27.00deg,#ffff47 27.75deg,#ffff49 28.50deg,#ffff4c 29.25deg,#ffff4f 30.00deg,#ffff51 30.75deg,#ffff54 31.50deg,#ffff57 32.25deg,#ffff5a 33.00deg,#ffff5d 33.75deg,#ffff60 34.50deg,#ffff63 35.25deg,#ffff67 36.00deg,#ffff6a 36.75deg,#ffff6d 37.50deg,#ffff71 38.25deg,#ffff75 39.00deg,#ffff78 39.75deg,#ffff7c 40.50deg,#ffff80 41.25deg,#ffff84 42.00deg,#ffff89 42.75deg,#ffff8d 43.50deg,#ffff92 44.25deg,#ffff96 45.00deg,#ffff9b 45.75deg,#ffffa1 46.50deg,#ffffa6 47.25deg,#ffffab 48.00deg,#ffffb1 48.75deg,#ffffb7 49.50deg,#ffffbe 50.25deg,#ffffc4 51.00deg,#ffffcb 51.75deg,#ffffd3 52.50deg,#ffffda 53.25deg,#ffffe2 54.00deg,#ffffeb 54.75deg,#fffff4 55.50deg,#fffffd 56.25deg,#ffffff 57.00deg,#ffffff 57.75deg,#ffffff 360deg);background-blend-mode:multiply;clip-path:polygon(562.7px 341.9px,366.8px 223.7px,274.1px 342.3px,280.3px 460.1px);"></div>
<div class="a" style="left:0;top:0;width:740px;height:563px;background:conic-gradient(from 19.087deg at 132.04px 522.14px,#00ffff 0.00deg,#00ffff 0.74deg,#04ffff 1.48deg,#0bffff 2.23deg,#13ffff 2.97deg,#1affff 3.71deg,#22ffff 4.45deg,#2affff 5.19deg,#32ffff 5.94deg,#3affff 6.68deg,#42ffff 7.42deg,#4bffff 8.16deg,#54ffff 8.90deg,#5dffff 9.65deg,#67ffff 10.39deg,#71ffff 11.13deg,#7bffff 11.87deg,#86ffff 12.61deg,#91ffff 13.36deg,#9dffff 14.10deg,#a9ffff 14.84deg,#b5ffff 15.58deg,#c2ffff 16.32deg,#cfffff 17.07deg,#deffff 17.81deg,#ecffff 18.55deg,#fcffff 19.29deg,#ffffff 20.03deg,#ffffff 20.78deg,#ffffff 360deg),conic-gradient(from -91.381deg at 562.70px 341.89px,#ffffff 0.00deg,#ffffff 0.74deg,#fffffa 1.49deg,#ffffee 2.23deg,#ffffe2 2.98deg,#ffffd6 3.72deg,#ffffcc 4.46deg,#ffffc2 5.21deg,#ffffb8 5.95deg,#ffffaf 6.70deg,#ffffa6 7.44deg,#ffff9e 8.18deg,#ffff96 8.93deg,#ffff8e 9.67deg,#ffff87 10.42deg,#ffff80 11.16deg,#ffff79 11.90deg,#ffff73 12.65deg,#ffff6c 13.39deg,#ffff66 14.14deg,#ffff61 14.88deg,#ffff5b 15.62deg,#ffff56 16.37deg,#ffff50 17.11deg,#ffff4b 17.86deg,#ffff47 18.60deg,#ffff42 19.34deg,#ffff3d 20.09deg,#ffff39 20.83deg,#ffff34 21.58deg,#ffff30 22.32deg,#ffff2c 23.06deg,#ffff28 23.81deg,#ffff24 24.55deg,#ffff21 25.30deg,#ffff1d 26.04deg,#ffff19 26.78deg,#ffff16 27.53deg,#ffff12 28.27deg,#ffff0f 29.02deg,#ffff0c 29.76deg,#ffff08 30.50deg,#ffff05 31.25deg,#ffff02 31.99deg,#ffff00 32.74deg,#ffff00 33.48deg,#ffff00 360deg);background-blend-mode:multiply;clip-path:polygon(370.6px 226.0px,263.9px 161.6px,197.1px 344.3px,275.5px 343.5px);"></div>
<div class="a" style="left:0;top:0;width:740px;height:563px;background:conic-gradient(from -184.867deg at 263.87px 161.64px,#ffffff 0.00deg,#ffffff 0.74deg,#fdffff 1.48deg,#f3ffff 2.22deg,#eaffff 2.97deg,#e0ffff 3.71deg,#d7ffff 4.45deg,#ceffff 5.19deg,#c5ffff 5.93deg,#bcffff 6.67deg,#b4ffff 7.42deg,#abffff 8.16deg,#a3ffff 8.90deg,#9affff 9.64deg,#92ffff 10.38deg,#8affff 11.12deg,#82ffff 11.86deg,#7affff 12.61deg,#72ffff 13.35deg,#6affff 14.09deg,#63ffff 14.83deg,#5bffff 15.57deg,#54ffff 16.31deg,#4cffff 17.06deg,#45ffff 17.80deg,#3dffff 18.54deg,#36ffff 19.28deg,#2fffff 20.02deg,#28ffff 20.76deg,#21ffff 21.51deg,#19ffff 22.25deg,#12ffff 22.99deg,#0bffff 23.73deg,#04ffff 24.47deg,#00ffff 25.21deg,#00ffff 25.95deg,#00ffff 360deg),conic-gradient(from -113.712deg at 562.70px 341.89px,#ff00ff 0.00deg,#ff00ff 0.73deg,#ff04ff 1.46deg,#ff09ff 2.19deg,#ff0fff 2.92deg,#ff15ff 3.65deg,#ff1bff 4.38deg,#ff21ff 5.11deg,#ff27ff 5.84deg,#ff2dff 6.56deg,#ff33ff 7.29deg,#ff3aff 8.02deg,#ff41ff 8.75deg,#ff48ff 9.48deg,#ff4fff 10.21deg,#ff56ff 10.94deg,#ff5dff 11.67deg,#ff65ff 12.40deg,#ff6dff 13.13deg,#ff75ff 13.86deg,#ff7eff 14.59deg,#ff86ff 15.32deg,#ff8fff 16.05deg,#ff98ff 16.78deg,#ffa2ff 17.51deg,#ffabff 18.23deg,#ffb6ff 18.96deg,#ffc0ff 19.69deg,#ffcbff 20.42deg,#ffd6ff 21.15deg,#ffe2ff 21.88deg,#ffeeff 22.61deg,#fffbff 23.34deg,#ffffff 24.07deg,#ffffff 24.80deg,#ffffff 360deg);background-blend-mode:multiply;clip-path:polygon(198.2px 341.3px,132.0px 522.1px,283.9px 458.6px,275.7px 341.8px);"></div></div>
<div style="position:absolute;left:1159.45px;top:678.2px;width:1.5px;height:6.5px;background:#b0b0b0"></div>
<div class="t" style="left:1155.48px;top:689.43px;font-size:16.86px;color:#d8d8d8;">0</div>
<div style="position:absolute;left:1153px;top:677.45px;width:7px;height:1.5px;background:#b0b0b0"></div>
<div class="t" style="left:1144.13px;top:671.53px;font-size:16.86px;color:#d8d8d8;">0</div>
<div style="position:absolute;left:1247.34px;top:678.2px;width:1.5px;height:6.5px;background:#b0b0b0"></div>
<div class="t" style="left:1236.92px;top:689.43px;font-size:16.86px;color:#d8d8d8;">0,1</div>
<div style="position:absolute;left:1153px;top:610.69px;width:7px;height:1.5px;background:#b0b0b0"></div>
<div class="t" style="left:1130.23px;top:604.77px;font-size:16.86px;color:#d8d8d8;">0,1</div>
<div style="position:absolute;left:1335.23px;top:678.2px;width:1.5px;height:6.5px;background:#b0b0b0"></div>
<div class="t" style="left:1324.85px;top:689.43px;font-size:16.86px;color:#d8d8d8;">0,2</div>
<div style="position:absolute;left:1153px;top:543.93px;width:7px;height:1.5px;background:#b0b0b0"></div>
<div class="t" style="left:1130.31px;top:538.01px;font-size:16.86px;color:#d8d8d8;">0,2</div>
<div style="position:absolute;left:1423.12px;top:678.2px;width:1.5px;height:6.5px;background:#b0b0b0"></div>
<div class="t" style="left:1412.65px;top:689.43px;font-size:16.86px;color:#d8d8d8;">0,3</div>
<div style="position:absolute;left:1153px;top:477.17px;width:7px;height:1.5px;background:#b0b0b0"></div>
<div class="t" style="left:1130.14px;top:471.25px;font-size:16.86px;color:#d8d8d8;">0,3</div>
<div style="position:absolute;left:1511.01px;top:678.2px;width:1.5px;height:6.5px;background:#b0b0b0"></div>
<div class="t" style="left:1500.42px;top:689.43px;font-size:16.86px;color:#d8d8d8;">0,4</div>
<div style="position:absolute;left:1153px;top:410.41px;width:7px;height:1.5px;background:#b0b0b0"></div>
<div class="t" style="left:1129.89px;top:404.49px;font-size:16.86px;color:#d8d8d8;">0,4</div>
<div style="position:absolute;left:1598.9px;top:678.2px;width:1.5px;height:6.5px;background:#b0b0b0"></div>
<div class="t" style="left:1588.43px;top:689.43px;font-size:16.86px;color:#d8d8d8;">0,5</div>
<div style="position:absolute;left:1153px;top:343.65px;width:7px;height:1.5px;background:#b0b0b0"></div>
<div class="t" style="left:1130.14px;top:337.73px;font-size:16.86px;color:#d8d8d8;">0,5</div>
<div style="position:absolute;left:1686.79px;top:678.2px;width:1.5px;height:6.5px;background:#b0b0b0"></div>
<div class="t" style="left:1676.32px;top:689.43px;font-size:16.86px;color:#d8d8d8;">0,6</div>
<div style="position:absolute;left:1153px;top:276.89px;width:7px;height:1.5px;background:#b0b0b0"></div>
<div class="t" style="left:1130.14px;top:270.97px;font-size:16.86px;color:#d8d8d8;">0,6</div>
<div style="position:absolute;left:1774.68px;top:678.2px;width:1.5px;height:6.5px;background:#b0b0b0"></div>
<div class="t" style="left:1764.30px;top:689.43px;font-size:16.86px;color:#d8d8d8;">0,7</div>
<div style="position:absolute;left:1153px;top:210.13px;width:7px;height:1.5px;background:#b0b0b0"></div>
<div class="t" style="left:1130.31px;top:204.21px;font-size:16.86px;color:#d8d8d8;">0,7</div>
<div style="position:absolute;left:1862.57px;top:678.2px;width:1.5px;height:6.5px;background:#b0b0b0"></div>
<div class="t" style="left:1852.10px;top:689.43px;font-size:16.86px;color:#d8d8d8;">0,8</div>
<div style="position:absolute;left:1153px;top:143.37px;width:7px;height:1.5px;background:#b0b0b0"></div>
<div class="t" style="left:1130.14px;top:137.45px;font-size:16.86px;color:#d8d8d8;">0,8</div>
<div class="a" style="left:1160px;top:116px;width:738px;height:561px;overflow:hidden"><div class="a" style="left:254.6px;top:151.3px;width:17.4px;height:17.4px;border:2.1px solid #f4f4f4"></div>
<div class="a" style="left:259.5px;top:223.1px;width:17.4px;height:17.4px;border:2.1px solid #f4f4f4"></div>
<div class="a" style="left:321.0px;top:222.1px;width:17.4px;height:17.4px;border:2.1px solid #f4f4f4"></div>
<div class="a" style="left:359.4px;top:214.6px;width:17.4px;height:17.4px;border:2.1px solid #f4f4f4"></div>
<div class="a" style="left:384.8px;top:234.5px;width:17.4px;height:17.4px;border:2.1px solid #f4f4f4"></div>
<div class="a" style="left:408.0px;top:257.7px;width:17.4px;height:17.4px;border:2.1px solid #f4f4f4"></div>
<div class="a" style="left:441.1px;top:280.7px;width:17.4px;height:17.4px;border:2.1px solid #f4f4f4"></div>
<div class="a" style="left:289.3px;top:266.8px;width:17.4px;height:17.4px;border:2.1px solid #f4f4f4"></div>
<div class="a" style="left:221.7px;top:310.5px;width:17.4px;height:17.4px;border:2.1px solid #f4f4f4"></div>
<div class="a" style="left:188.3px;top:332.5px;width:17.4px;height:17.4px;border:2.1px solid #f4f4f4"></div>
<div class="a" style="left:324.4px;top:314.1px;width:17.4px;height:17.4px;border:2.1px solid #f4f4f4"></div>
<div class="a" style="left:342.7px;top:308.8px;width:17.4px;height:17.4px;border:2.1px solid #f4f4f4"></div>
<div class="a" style="left:173.6px;top:371.1px;width:17.4px;height:17.4px;border:2.1px solid #f4f4f4"></div>
<div class="a" style="left:210.3px;top:374.6px;width:17.4px;height:17.4px;border:2.1px solid #f4f4f4"></div>
<div class="a" style="left:226.5px;top:383.3px;width:17.4px;height:17.4px;border:2.1px solid #f4f4f4"></div>
<div class="a" style="left:246.5px;top:403.5px;width:17.4px;height:17.4px;border:2.1px solid #f4f4f4"></div>
<div class="a" style="left:319.4px;top:386.3px;width:17.4px;height:17.4px;border:2.1px solid #f4f4f4"></div>
<div class="a" style="left:272.9px;top:449.0px;width:17.4px;height:17.4px;border:2.1px solid #f4f4f4"></div>
<div class="a" style="left:180.9px;top:423.3px;width:17.4px;height:17.4px;border:2.1px solid #f4f4f4"></div>
<div class="a" style="left:159.5px;top:458.1px;width:17.4px;height:17.4px;border:2.1px solid #f4f4f4"></div>
<div class="a" style="left:122.7px;top:511.8px;width:17.4px;height:17.4px;border:2.1px solid #f4f4f4"></div>
<div class="a" style="left:397.2px;top:343.1px;width:17.4px;height:17.4px;border:2.1px solid #f4f4f4"></div>
<div class="a" style="left:463.6px;top:340.4px;width:17.4px;height:17.4px;border:2.1px solid #f4f4f4"></div>
<div class="a" style="left:553.4px;top:331.6px;width:17.4px;height:17.4px;border:2.1px solid #f4f4f4"></div>
<div class="a" style="left:265.7px;top:332.3px;width:17.4px;height:17.4px;border:2.1px solid #111"></div>
<div class="a" style="left:210.9px;top:73.6px;width:10.8px;height:10.8px;border-radius:50%;border:1.8px solid #111;background:#22ee22"></div>
<div class="a" style="left:234.7px;top:177.3px;width:10.8px;height:10.8px;border-radius:50%;border:1.8px solid #111;background:#5a8a5a"></div>
<div class="a" style="left:327.6px;top:189.7px;width:10.8px;height:10.8px;border-radius:50%;border:1.8px solid #111;background:#a8b868"></div>
<div class="a" style="left:374.9px;top:190.0px;width:10.8px;height:10.8px;border-radius:50%;border:1.8px solid #111;background:#ffff10"></div>
<div class="a" style="left:289.9px;top:242.0px;width:10.8px;height:10.8px;border-radius:50%;border:1.8px solid #111;background:#5a645a"></div>
<div class="a" style="left:412.9px;top:222.1px;width:10.8px;height:10.8px;border-radius:50%;border:1.8px solid #111;background:#e0c050"></div>
<div class="a" style="left:445.3px;top:253.5px;width:10.8px;height:10.8px;border-radius:50%;border:1.8px solid #111;background:#e0a848"></div>
<div class="a" style="left:484.4px;top:283.0px;width:10.8px;height:10.8px;border-radius:50%;border:1.8px solid #111;background:#d89050"></div>
<div class="a" style="left:377.2px;top:308.1px;width:10.8px;height:10.8px;border-radius:50%;border:1.8px solid #111;background:#6a5a52"></div>
<div class="a" style="left:339.8px;top:317.6px;width:10.8px;height:10.8px;border-radius:50%;border:1.8px solid #111;background:#b8a090"></div>
<div class="a" style="left:264.5px;top:338.0px;width:10.8px;height:10.8px;border-radius:50%;border:1.8px solid #111;background:#b8b8b8"></div>
<div class="a" style="left:267.2px;top:334.7px;width:10.8px;height:10.8px;border-radius:50%;border:1.8px solid #111;background:#9a9a9a"></div>
<div class="a" style="left:202.0px;top:303.7px;width:10.8px;height:10.8px;border-radius:50%;border:1.8px solid #111;background:#78b0a0"></div>
<div class="a" style="left:161.8px;top:334.5px;width:10.8px;height:10.8px;border-radius:50%;border:1.8px solid #111;background:#22ffff"></div>
<div class="a" style="left:153.7px;top:374.4px;width:10.8px;height:10.8px;border-radius:50%;border:1.8px solid #111;background:#2a8898"></div>
<div class="a" style="left:200.6px;top:380.8px;width:10.8px;height:10.8px;border-radius:50%;border:1.8px solid #111;background:#5a7090"></div>
<div class="a" style="left:226.9px;top:390.5px;width:10.8px;height:10.8px;border-radius:50%;border:1.8px solid #111;background:#8888a0"></div>
<div class="a" style="left:252.0px;top:425.8px;width:10.8px;height:10.8px;border-radius:50%;border:1.8px solid #111;background:#5a4a6a"></div>
<div class="a" style="left:270.7px;top:448.0px;width:10.8px;height:10.8px;border-radius:50%;border:1.8px solid #111;background:#000000"></div>
<div class="a" style="left:290.3px;top:463.0px;width:10.8px;height:10.8px;border-radius:50%;border:1.8px solid #111;background:#ff22ff"></div>
<div class="a" style="left:344.9px;top:402.5px;width:10.8px;height:10.8px;border-radius:50%;border:1.8px solid #111;background:#b06890"></div>
<div class="a" style="left:171.1px;top:439.4px;width:10.8px;height:10.8px;border-radius:50%;border:1.8px solid #111;background:#5a6a98"></div>
<div class="a" style="left:150.4px;top:479.8px;width:10.8px;height:10.8px;border-radius:50%;border:1.8px solid #111;background:#3a4a80"></div>
<div class="a" style="left:124.5px;top:523.5px;width:10.8px;height:10.8px;border-radius:50%;border:1.8px solid #111;background:#2222ff"></div>
<div class="a" style="left:436.1px;top:355.5px;width:10.8px;height:10.8px;border-radius:50%;border:1.8px solid #111;background:#b86a78"></div>
<div class="a" style="left:522.0px;top:354.5px;width:10.8px;height:10.8px;border-radius:50%;border:1.8px solid #111;background:#a04a58"></div>
<div class="a" style="left:600.9px;top:349.6px;width:10.8px;height:10.8px;border-radius:50%;border:1.8px solid #111;background:#ff2222"></div></div>
<div style="position:absolute;left:1639px;top:119.5px;width:257px;height:219px;background:#2a2a2a"></div>
<div style="position:absolute;left:1641.5px;top:124.0px;width:251.5px;height:211.5px;background:#9a9a9a"></div>
<div class="a" style="left:1643px;top:125.5px;width:248.5px;height:208.5px;overflow:hidden;background:#252525"><div class="a" style="left:0;top:0;width:740px;height:563px;transform-origin:0 0;transform:translate(-991.61px,-646.76px) scale(3.021,3.333)"><div class="a" style="left:0;top:0;width:740px;height:563px;background:conic-gradient(from 37.175deg at 132.04px 522.14px,#ffffff 0.00deg,#ffffff 0.74deg,#fffcff 1.48deg,#ffedff 2.22deg,#ffdfff 2.96deg,#ffd2ff 3.70deg,#ffc6ff 4.45deg,#ffbbff 5.19deg,#ffb0ff 5.93deg,#ffa6ff 6.67deg,#ff9cff 7.41deg,#ff93ff 8.15deg,#ff8bff 8.89deg,#ff83ff 9.63deg,#ff7bff 10.37deg,#ff74ff 11.11deg,#ff6dff 11.85deg,#ff66ff 12.59deg,#ff60ff 13.34deg,#ff5aff 14.08deg,#ff54ff 14.82deg,#ff4eff 15.56deg,#ff49ff 16.30deg,#ff44ff 17.04deg,#ff3fff 17.78deg,#ff3aff 18.52deg,#ff35ff 19.26deg,#ff31ff 20.00deg,#ff2dff 20.74deg,#ff28ff 21.49deg,#ff24ff 22.23deg,#ff20ff 22.97deg,#ff1dff 23.71deg,#ff19ff 24.45deg,#ff15ff 25.19deg,#ff12ff 25.93deg,#ff0fff 26.67deg,#ff0bff 27.41deg,#ff08ff 28.15deg,#ff05ff 28.89deg,#ff02ff 29.63deg,#ff00ff 30.38deg,#ff00ff 50.38deg,#ff00ff 360deg),conic-gradient(from 102.591deg at 263.87px 161.64px,#ffff00 0.00deg,#ffff00 18.63deg,#ffff02 19.38deg,#ffff04 20.12deg,#ffff05 20.87deg,#ffff07 21.61deg,#ffff09 22.36deg,#ffff0a 23.10deg,#ffff0c 23.85deg,#ffff0e 24.59deg,#ffff10 25.34deg,#ffff11 26.08deg,#ffff13 26.83deg,#ffff15 27.58deg,#ffff17 28.32deg,#ffff18 29.07deg,#ffff1a 29.81deg,#ffff1c 30.56deg,#ffff1e 31.30deg,#ffff20 32.05deg,#ffff22 32.79deg,#ffff24 33.54deg,#ffff26 34.28deg,#ffff28 35.03deg,#ffff2a 35.77deg,#ffff2c 36.52deg,#ffff2e 37.26deg,#ffff30 38.01deg,#ffff32 38.75deg,#ffff34 39.50deg,#ffff37 40.25deg,#ffff39 40.99deg,#ffff3b 41.74deg,#ffff3e 42.48deg,#ffff40 43.23deg,#ffff42 43.97deg,#ffff45 44.72deg,#ffff47 45.46deg,#ffff4a 46.21deg,#ffff4d 46.95deg,#ffff4f 47.70deg,#ffff52 48.44deg,#ffff55 49.19deg,#ffff58 49.93deg,#ffff5b 50.68deg,#ffff5e 51.42deg,#ffff61 52.17deg,#ffff64 52.92deg,#ffff67 53.66deg,#ffff6b 54.41deg,#ffff6e 55.15deg,#ffff72 55.90deg,#ffff75 56.64deg,#ffff79 57.39deg,#ffff7d 58.13deg,#ffff81 58.88deg,#ffff85 59.62deg,#ffff89 60.37deg,#ffff8e 61.11deg,#ffff92 61.86deg,#ffff97 62.60deg,#ffff9c 63.35deg,#ffffa1 64.09deg,#ffffa6 64.84deg,#ffffac 65.58deg,#ffffb2 66.33deg,#ffffb8 67.08deg,#ffffbe 67.82deg,#ffffc5 68.57deg,#ffffcc 69.31deg,#ffffd3 70.06deg,#ffffdb 70.80deg,#ffffe3 71.55deg,#ffffeb 72.29deg,#fffff4 73.04deg,#fffffe 73.78deg,#ffffff 74.53deg,#ffffff 75.27deg,#ffffff 360deg);background-blend-mode:multiply;clip-path:polygon(274.1px 342.3px,391.3px 192.4px,398.2px 197.7px,405.9px 203.5px,413.5px 209.2px,421.0px 214.9px,428.5px 220.6px,436.0px 226.2px,443.3px 231.8px,450.6px 237.3px,457.9px 242.8px,465.0px 248.2px,472.1px 253.6px,479.0px 258.8px,485.9px 264.0px,492.6px 269.1px,499.3px 274.1px,505.7px 279.0px,512.1px 283.8px,518.3px 288.5px,524.3px 293.1px,530.1px 297.5px,535.7px 301.7px,541.0px 305.8px,546.2px 309.7px,551.3px 313.5px,556.2px 317.2px,560.9px 320.8px,565.5px 324.3px,569.9px 327.6px,574.1px 330.7px,578.0px 333.7px,581.8px 336.5px,585.4px 339.2px,588.8px 341.8px,592.0px 344.2px,595.0px 346.6px,597.9px 348.8px,600.7px 350.8px,603.2px 352.8px,605.7px 354.6px,608.0px 356.4px,610.1px 358.0px,612.2px 359.6px,614.1px 361.0px,616.0px 362.4px,617.7px 363.7px,619.3px 364.9px,620.9px 366.1px,622.4px 367.3px,623.8px 368.4px,625.2px 369.4px,626.5px 370.4px,627.7px 371.3px,628.9px 372.2px,630.0px 373.1px,631.1px 373.9px,632.1px 374.7px,633.1px 375.4px,634.0px 376.1px,634.8px 376.7px,635.6px 377.3px,636.2px 377.7px,636.7px 378.1px,637.3px 378.5px,638.3px 379.3px,640.0px 380.6px,642.3px 382.3px,644.4px 384.0px,645.9px 385.1px,283.1px 513.0px);filter:brightness(0.6);"></div>
<div class="a" style="left:0;top:0;width:740px;height:563px;background:conic-gradient(from -29.895deg at 132.04px 522.14px,#00ffff 0.00deg,#00ffff 49.73deg,#05ffff 50.48deg,#0cffff 51.22deg,#13ffff 51.96deg,#1affff 52.70deg,#22ffff 53.44deg,#2affff 54.19deg,#32ffff 54.93deg,#3affff 55.67deg,#42ffff 56.41deg,#4bffff 57.16deg,#54ffff 57.90deg,#5effff 58.64deg,#67ffff 59.38deg,#71ffff 60.12deg,#7cffff 60.87deg,#86ffff 61.61deg,#91ffff 62.35deg,#9dffff 63.09deg,#a9ffff 63.84deg,#b5ffff 64.58deg,#c2ffff 65.32deg,#d0ffff 66.06deg,#deffff 66.81deg,#edffff 67.55deg,#fcffff 68.29deg,#ffffff 69.03deg,#ffffff 69.77deg,#ffffff 360deg),conic-gradient(from -91.459deg at 562.70px 341.89px,#ffffff 0.00deg,#ffffff 0.74deg,#fffffc 1.48deg,#ffffef 2.22deg,#ffffe3 2.96deg,#ffffd8 3.70deg,#ffffcd 4.44deg,#ffffc3 5.18deg,#ffffb9 5.92deg,#ffffb0 6.66deg,#ffffa7 7.40deg,#ffff9f 8.14deg,#ffff97 8.87deg,#ffff8f 9.61deg,#ffff88 10.35deg,#ffff81 11.09deg,#ffff7a 11.83deg,#ffff74 12.57deg,#ffff6e 13.31deg,#ffff68 14.05deg,#ffff62 14.79deg,#ffff5c 15.53deg,#ffff57 16.27deg,#ffff52 17.01deg,#ffff4d 17.75deg,#ffff48 18.49deg,#ffff43 19.23deg,#ffff3e 19.97deg,#ffff3a 20.71deg,#ffff36 21.45deg,#ffff31 22.19deg,#ffff2d 22.93deg,#ffff29 23.67deg,#ffff25 24.41deg,#ffff22 25.15deg,#ffff1e 25.88deg,#ffff1a 26.62deg,#ffff17 27.36deg,#ffff13 28.10deg,#ffff10 28.84deg,#ffff0d 29.58deg,#ffff09 30.32deg,#ffff06 31.06deg,#ffff03 31.80deg,#ffff00 32.54deg,#ffff00 43.63deg,#ffff00 360deg);background-blend-mode:multiply;clip-path:polygon(34.9px 346.1px,30.0px 327.3px,25.2px 307.1px,20.9px 286.7px,16.9px 265.9px,13.2px 244.7px,10.0px 223.4px,7.4px 202.8px,5.5px 182.6px,4.1px 162.6px,3.5px 143.4px,3.6px 125.1px,4.6px 107.6px,6.4px 90.9px,9.0px 75.4px,12.4px 61.4px,16.8px 48.8px,22.0px 37.7px,27.9px 28.0px,34.4px 20.1px,41.4px 14.1px,49.1px 9.9px,57.2px 7.2px,65.5px 5.6px,74.0px 5.2px,82.8px 6.3px,91.7px 8.3px,100.6px 10.6px,109.5px 13.4px,118.5px 16.7px,127.4px 20.4px,136.2px 24.2px,144.7px 28.0px,153.2px 32.0px,161.5px 36.1px,169.7px 40.4px,177.9px 44.8px,186.0px 49.3px,194.0px 53.9px,202.0px 58.6px,210.0px 63.5px,218.0px 68.4px,225.9px 73.5px,233.8px 78.7px,241.7px 83.9px,249.6px 89.2px,257.4px 94.6px,265.3px 100.0px,273.1px 105.5px,281.0px 111.1px,288.8px 116.7px,296.7px 122.3px,304.5px 128.0px,312.4px 133.7px,320.3px 139.5px,328.1px 145.3px,336.0px 151.1px,343.8px 156.9px,351.6px 162.8px,359.4px 168.6px,367.2px 174.4px,375.0px 180.2px,382.8px 186.1px,390.5px 191.9px,395.4px 195.5px,275.5px 343.5px);filter:brightness(0.6);"></div>
<div class="a" style="left:0;top:0;width:740px;height:563px;background:conic-gradient(from -184.892deg at 263.87px 161.64px,#ffffff 0.00deg,#ffffff 0.75deg,#fdffff 1.49deg,#f3ffff 2.24deg,#eaffff 2.98deg,#e0ffff 3.73deg,#d7ffff 4.47deg,#ceffff 5.22deg,#c5ffff 5.96deg,#bcffff 6.71deg,#b4ffff 7.45deg,#abffff 8.20deg,#a2ffff 8.94deg,#9affff 9.69deg,#92ffff 10.43deg,#8affff 11.18deg,#82ffff 11.92deg,#7affff 12.67deg,#72ffff 13.41deg,#6affff 14.16deg,#62ffff 14.90deg,#5bffff 15.65deg,#53ffff 16.39deg,#4bffff 17.14deg,#44ffff 17.88deg,#3dffff 18.63deg,#35ffff 19.37deg,#2effff 20.12deg,#27ffff 20.86deg,#20ffff 21.61deg,#19ffff 22.35deg,#12ffff 23.10deg,#0bffff 23.84deg,#04ffff 24.59deg,#00ffff 25.33deg,#00ffff 58.11deg,#00ffff 360deg),conic-gradient(from -122.653deg at 562.70px 341.89px,#ff00ff 0.00deg,#ff00ff 9.56deg,#ff03ff 10.30deg,#ff08ff 11.03deg,#ff0eff 11.77deg,#ff14ff 12.50deg,#ff1aff 13.24deg,#ff20ff 13.97deg,#ff26ff 14.71deg,#ff2cff 15.44deg,#ff33ff 16.18deg,#ff3aff 16.91deg,#ff40ff 17.65deg,#ff47ff 18.38deg,#ff4eff 19.12deg,#ff56ff 19.86deg,#ff5dff 20.59deg,#ff65ff 21.33deg,#ff6dff 22.06deg,#ff75ff 22.80deg,#ff7eff 23.53deg,#ff86ff 24.27deg,#ff8fff 25.00deg,#ff98ff 25.74deg,#ffa2ff 26.47deg,#ffacff 27.21deg,#ffb6ff 27.94deg,#ffc1ff 28.68deg,#ffccff 29.42deg,#ffd7ff 30.15deg,#ffe3ff 30.89deg,#ffefff 31.62deg,#fffcff 32.36deg,#ffffff 33.09deg,#ffffff 33.83deg,#ffffff 360deg);background-blend-mode:multiply;clip-path:polygon(153.2px 558.9px,153.2px 558.9px,153.1px 558.9px,153.0px 558.9px,153.0px 558.9px,152.9px 558.9px,152.8px 559.0px,152.6px 559.0px,152.5px 559.0px,152.4px 559.0px,152.2px 559.0px,152.1px 559.0px,151.9px 559.0px,151.7px 559.0px,151.4px 558.9px,151.1px 558.9px,150.8px 558.8px,150.6px 558.7px,150.4px 558.6px,150.1px 558.5px,149.9px 558.3px,149.6px 558.2px,149.3px 558.0px,149.0px 557.8px,148.6px 557.6px,148.3px 557.3px,147.8px 557.1px,147.4px 556.8px,146.9px 556.5px,146.4px 556.1px,145.9px 555.7px,145.3px 555.3px,144.7px 554.9px,144.0px 554.5px,143.4px 554.0px,142.6px 553.5px,141.8px 553.0px,140.9px 552.4px,139.9px 551.8px,138.9px 551.1px,137.8px 550.4px,136.7px 549.6px,135.5px 548.8px,134.3px 548.0px,132.9px 547.0px,131.5px 546.0px,130.0px 544.9px,128.4px 543.7px,126.8px 542.4px,125.0px 540.9px,123.3px 539.4px,121.4px 537.7px,119.3px 535.6px,117.0px 533.1px,114.6px 530.4px,112.0px 527.2px,109.3px 523.6px,106.4px 519.6px,103.3px 515.1px,100.0px 510.1px,96.5px 504.3px,92.8px 497.7px,88.9px 490.6px,84.8px 482.6px,80.4px 473.6px,75.8px 463.7px,70.8px 452.9px,65.7px 441.1px,60.6px 428.2px,55.5px 414.1px,50.3px 398.8px,45.1px 382.5px,40.1px 365.3px,35.1px 346.8px,33.4px 340.3px,275.7px 341.8px,287.7px 511.4px);filter:brightness(0.6);"></div>
<div class="a" style="left:0;top:0;width:740px;height:563px;background:conic-gradient(from 37.190deg at 132.04px 522.14px,#ffffff 0.00deg,#ffffff 0.74deg,#fffcff 1.48deg,#ffedff 2.22deg,#ffdfff 2.96deg,#ffd2ff 3.70deg,#ffc6ff 4.44deg,#ffbaff 5.18deg,#ffb0ff 5.92deg,#ffa6ff 6.66deg,#ff9cff 7.40deg,#ff93ff 8.14deg,#ff8bff 8.89deg,#ff82ff 9.63deg,#ff7bff 10.37deg,#ff73ff 11.11deg,#ff6dff 11.85deg,#ff66ff 12.59deg,#ff60ff 13.33deg,#ff59ff 14.07deg,#ff54ff 14.81deg,#ff4eff 15.55deg,#ff49ff 16.29deg,#ff44ff 17.03deg,#ff3fff 17.77deg,#ff3aff 18.51deg,#ff35ff 19.25deg,#ff31ff 19.99deg,#ff2dff 20.73deg,#ff28ff 21.47deg,#ff24ff 22.21deg,#ff20ff 22.95deg,#ff1dff 23.69deg,#ff19ff 24.43deg,#ff15ff 25.17deg,#ff12ff 25.92deg,#ff0fff 26.66deg,#ff0bff 27.40deg,#ff08ff 28.14deg,#ff05ff 28.88deg,#ff02ff 29.62deg,#ff00ff 30.36deg,#ff00ff 31.10deg,#ff00ff 360deg),conic-gradient(from 120.098deg at 263.87px 161.64px,#ffff00 0.00deg,#ffff00 0.75deg,#ffff01 1.50deg,#ffff03 2.25deg,#ffff04 3.00deg,#ffff06 3.75deg,#ffff08 4.50deg,#ffff0a 5.25deg,#ffff0b 6.00deg,#ffff0d 6.75deg,#ffff0f 7.50deg,#ffff11 8.25deg,#ffff12 9.00deg,#ffff14 9.75deg,#ffff16 10.50deg,#ffff18 11.25deg,#ffff1a 12.00deg,#ffff1b 12.75deg,#ffff1d 13.50deg,#ffff1f 14.25deg,#ffff21 15.00deg,#ffff23 15.75deg,#ffff25 16.50deg,#ffff27 17.25deg,#ffff29 18.00deg,#ffff2b 18.75deg,#ffff2d 19.50deg,#ffff2f 20.25deg,#ffff32 21.00deg,#ffff34 21.75deg,#ffff36 22.50deg,#ffff38 23.25deg,#ffff3b 24.00deg,#ffff3d 24.75deg,#ffff3f 25.50deg,#ffff42 26.25deg,#ffff44 27.00deg,#ffff47 27.75deg,#ffff49 28.50deg,#ffff4c 29.25deg,#ffff4f 30.00deg,#ffff51 30.75deg,#ffff54 31.50deg,#ffff57 32.25deg,#ffff5a 33.00deg,#ffff5d 33.75deg,#ffff60 34.50deg,#ffff63 35.25deg,#ffff67 36.00deg,#ffff6a 36.75deg,#ffff6d 37.50deg,#ffff71 38.25deg,#ffff75 39.00deg,#ffff78 39.75deg,#ffff7c 40.50deg,#ffff80 41.25deg,#ffff84 42.00deg,#ffff89 42.75deg,#ffff8d 43.50deg,#ffff92 44.25deg,#ffff96 45.00deg,#ffff9b 45.75deg,#ffffa1 46.50deg,#ffffa6 47.25deg,#ffffab 48.00deg,#ffffb1 48.75deg,#ffffb7 49.50deg,#ffffbe 50.25deg,#ffffc4 51.00deg,#ffffcb 51.75deg,#ffffd3 52.50deg,#ffffda 53.25deg,#ffffe2 54.00deg,#ffffeb 54.75deg,#fffff4 55.50deg,#fffffd 56.25deg,#ffffff 57.00deg,#ffffff 57.75deg,#ffffff 360deg);background-blend-mode:multiply;clip-path:polygon(562.7px 341.9px,366.8px 223.7px,274.1px 342.3px,280.3px 460.1px);"></div>
<div class="a" style="left:0;top:0;width:740px;height:563px;background:conic-gradient(from 19.087deg at 132.04px 522.14px,#00ffff 0.00deg,#00ffff 0.74deg,#04ffff 1.48deg,#0bffff 2.23deg,#13ffff 2.97deg,#1affff 3.71deg,#22ffff 4.45deg,#2affff 5.19deg,#32ffff 5.94deg,#3affff 6.68deg,#42ffff 7.42deg,#4bffff 8.16deg,#54ffff 8.90deg,#5dffff 9.65deg,#67ffff 10.39deg,#71ffff 11.13deg,#7bffff 11.87deg,#86ffff 12.61deg,#91ffff 13.36deg,#9dffff 14.10deg,#a9ffff 14.84deg,#b5ffff 15.58deg,#c2ffff 16.32deg,#cfffff 17.07deg,#deffff 17.81deg,#ecffff 18.55deg,#fcffff 19.29deg,#ffffff 20.03deg,#ffffff 20.78deg,#ffffff 360deg),conic-gradient(from -91.381deg at 562.70px 341.89px,#ffffff 0.00deg,#ffffff 0.74deg,#fffffa 1.49deg,#ffffee 2.23deg,#ffffe2 2.98deg,#ffffd6 3.72deg,#ffffcc 4.46deg,#ffffc2 5.21deg,#ffffb8 5.95deg,#ffffaf 6.70deg,#ffffa6 7.44deg,#ffff9e 8.18deg,#ffff96 8.93deg,#ffff8e 9.67deg,#ffff87 10.42deg,#ffff80 11.16deg,#ffff79 11.90deg,#ffff73 12.65deg,#ffff6c 13.39deg,#ffff66 14.14deg,#ffff61 14.88deg,#ffff5b 15.62deg,#ffff56 16.37deg,#ffff50 17.11deg,#ffff4b 17.86deg,#ffff47 18.60deg,#ffff42 19.34deg,#ffff3d 20.09deg,#ffff39 20.83deg,#ffff34 21.58deg,#ffff30 22.32deg,#ffff2c 23.06deg,#ffff28 23.81deg,#ffff24 24.55deg,#ffff21 25.30deg,#ffff1d 26.04deg,#ffff19 26.78deg,#ffff16 27.53deg,#ffff12 28.27deg,#ffff0f 29.02deg,#ffff0c 29.76deg,#ffff08 30.50deg,#ffff05 31.25deg,#ffff02 31.99deg,#ffff00 32.74deg,#ffff00 33.48deg,#ffff00 360deg);background-blend-mode:multiply;clip-path:polygon(370.6px 226.0px,263.9px 161.6px,197.1px 344.3px,275.5px 343.5px);"></div>
<div class="a" style="left:0;top:0;width:740px;height:563px;background:conic-gradient(from -184.867deg at 263.87px 161.64px,#ffffff 0.00deg,#ffffff 0.74deg,#fdffff 1.48deg,#f3ffff 2.22deg,#eaffff 2.97deg,#e0ffff 3.71deg,#d7ffff 4.45deg,#ceffff 5.19deg,#c5ffff 5.93deg,#bcffff 6.67deg,#b4ffff 7.42deg,#abffff 8.16deg,#a3ffff 8.90deg,#9affff 9.64deg,#92ffff 10.38deg,#8affff 11.12deg,#82ffff 11.86deg,#7affff 12.61deg,#72ffff 13.35deg,#6affff 14.09deg,#63ffff 14.83deg,#5bffff 15.57deg,#54ffff 16.31deg,#4cffff 17.06deg,#45ffff 17.80deg,#3dffff 18.54deg,#36ffff 19.28deg,#2fffff 20.02deg,#28ffff 20.76deg,#21ffff 21.51deg,#19ffff 22.25deg,#12ffff 22.99deg,#0bffff 23.73deg,#04ffff 24.47deg,#00ffff 25.21deg,#00ffff 25.95deg,#00ffff 360deg),conic-gradient(from -113.712deg at 562.70px 341.89px,#ff00ff 0.00deg,#ff00ff 0.73deg,#ff04ff 1.46deg,#ff09ff 2.19deg,#ff0fff 2.92deg,#ff15ff 3.65deg,#ff1bff 4.38deg,#ff21ff 5.11deg,#ff27ff 5.84deg,#ff2dff 6.56deg,#ff33ff 7.29deg,#ff3aff 8.02deg,#ff41ff 8.75deg,#ff48ff 9.48deg,#ff4fff 10.21deg,#ff56ff 10.94deg,#ff5dff 11.67deg,#ff65ff 12.40deg,#ff6dff 13.13deg,#ff75ff 13.86deg,#ff7eff 14.59deg,#ff86ff 15.32deg,#ff8fff 16.05deg,#ff98ff 16.78deg,#ffa2ff 17.51deg,#ffabff 18.23deg,#ffb6ff 18.96deg,#ffc0ff 19.69deg,#ffcbff 20.42deg,#ffd6ff 21.15deg,#ffe2ff 21.88deg,#ffeeff 22.61deg,#fffbff 23.34deg,#ffffff 24.07deg,#ffffff 24.80deg,#ffffff 360deg);background-blend-mode:multiply;clip-path:polygon(198.2px 341.3px,132.0px 522.1px,283.9px 458.6px,275.7px 341.8px);"></div></div><div class="a" style="left:113.6px;top:94.0px;width:17.4px;height:17.4px;border:2.1px solid #f4f4f4"></div><div class="a" style="left:-1.0px;top:122.1px;width:17.4px;height:17.4px;border:2.1px solid #f4f4f4"></div><div class="a" style="left:188.1px;top:165.5px;width:17.4px;height:17.4px;border:2.1px solid #f4f4f4"></div><div class="a" style="left:9.7px;top:7.7px;width:10.8px;height:10.8px;border-radius:50%;border:1.8px solid #111;background:#a8b868"></div><div class="a" style="left:153.8px;top:4.5px;width:10.8px;height:10.8px;border-radius:50%;border:1.8px solid #111;background:#ffff10"></div></div>
<div style="position:absolute;left:1607.5px;top:640.8px;width:287.5px;height:31px;background:#303030"></div>
<div class="t" style="left:1607.39px;top:645.35px;font-size:24.27px;color:#f4f4f4;transform:scaleX(0.9319);">RGB Triplet: 255, 255, 0</div>
<div class="a" style="left:0;top:0;width:1909px;height:1044px;overflow:hidden"><div style="position:absolute;left:375px;top:734.5px;width:1535px;height:257.5px;background:#111"></div>
<div style="position:absolute;left:376px;top:735.5px;width:1533px;height:16.2px;background:#333"></div>
<div style="position:absolute;left:376px;top:751.7px;width:1533px;height:15.1px;background:#181818"></div>
<div style="position:absolute;left:376px;top:766.7px;width:1533px;height:29.6px;background:#424242"></div>
<div class="t" style="left:392.90px;top:774.73px;font-size:18.75px;color:#f0f0f0;font-weight:bold;transform:scaleX(1.1034);">x: CIE31</div>
<div class="t" style="left:564.99px;top:773.43px;font-size:20.29px;color:#f0f0f0;transform:scaleX(1.05);">0,3076</div>
<div class="t" style="left:664.49px;top:773.43px;font-size:20.29px;color:#f0f0f0;transform:scaleX(1.05);">0,3103</div>
<div class="t" style="left:765.29px;top:773.43px;font-size:20.29px;color:#f0f0f0;transform:scaleX(1.05);">0,3106</div>
<div class="t" style="left:865.59px;top:773.43px;font-size:20.29px;color:#f0f0f0;transform:scaleX(1.05);">0,3107</div>
<div class="t" style="left:965.99px;top:773.43px;font-size:20.29px;color:#f0f0f0;transform:scaleX(1.05);">0,3106</div>
<div class="t" style="left:1066.29px;top:773.43px;font-size:20.29px;color:#f0f0f0;transform:scaleX(1.05);">0,3146</div>
<div class="t" style="left:1142.49px;top:773.43px;font-size:20.29px;color:#f0f0f0;transform:scaleX(1.05);">0,4358</div>
<div class="t" style="left:1238.69px;top:773.43px;font-size:20.29px;color:#f0f0f0;transform:scaleX(1.05);">0,3932</div>
<div class="t" style="left:1338.19px;top:773.43px;font-size:20.29px;color:#f0f0f0;transform:scaleX(1.05);">0,2348</div>
<div class="t" style="left:1426.79px;top:773.43px;font-size:20.29px;color:#f0f0f0;transform:scaleX(1.05);">0,3365</div>
<div class="t" style="left:1514.99px;top:773.43px;font-size:20.29px;color:#f0f0f0;transform:scaleX(1.05);">0,2648</div>
<div class="t" style="left:1633.59px;top:773.43px;font-size:20.29px;color:#f0f0f0;transform:scaleX(1.05);">0,2364</div>
<div class="t" style="left:1759.49px;top:773.43px;font-size:20.29px;color:#f0f0f0;transform:scaleX(1.05);">0,5577</div>
<div class="t" style="left:1860.29px;top:773.43px;font-size:20.29px;color:#f0f0f0;transform:scaleX(1.05);">0,2013</div>
<div style="position:absolute;left:376px;top:796.1px;width:1533px;height:29.6px;background:#7f7f7f"></div>
<div style="position:absolute;left:376px;top:796.1px;width:1533px;height:1px;background:#8c8c8c"></div>
<div class="t" style="left:392.90px;top:804.13px;font-size:18.75px;color:#f0f0f0;font-weight:bold;transform:scaleX(1.1034);">y: CIE31</div>
<div class="t" style="left:564.99px;top:802.83px;font-size:20.29px;color:#f0f0f0;transform:scaleX(1.05);">0,3253</div>
<div class="t" style="left:664.49px;top:802.83px;font-size:20.29px;color:#f0f0f0;transform:scaleX(1.05);">0,3293</div>
<div class="t" style="left:765.29px;top:802.83px;font-size:20.29px;color:#f0f0f0;transform:scaleX(1.05);">0,3300</div>
<div class="t" style="left:865.59px;top:802.83px;font-size:20.29px;color:#f0f0f0;transform:scaleX(1.05);">0,3303</div>
<div class="t" style="left:965.99px;top:802.83px;font-size:20.29px;color:#f0f0f0;transform:scaleX(1.05);">0,3305</div>
<div class="t" style="left:1066.29px;top:802.83px;font-size:20.29px;color:#f0f0f0;transform:scaleX(1.05);">0,1606</div>
<div class="t" style="left:1142.49px;top:802.83px;font-size:20.29px;color:#f0f0f0;transform:scaleX(1.05);">0,3701</div>
<div class="t" style="left:1238.69px;top:802.83px;font-size:20.29px;color:#f0f0f0;transform:scaleX(1.05);">0,3559</div>
<div class="t" style="left:1338.19px;top:802.83px;font-size:20.29px;color:#f0f0f0;transform:scaleX(1.05);">0,2612</div>
<div class="t" style="left:1426.79px;top:802.83px;font-size:20.29px;color:#f0f0f0;transform:scaleX(1.05);">0,4692</div>
<div class="t" style="left:1514.99px;top:802.83px;font-size:20.29px;color:#f0f0f0;transform:scaleX(1.05);">0,2467</div>
<div class="t" style="left:1633.59px;top:802.83px;font-size:20.29px;color:#f0f0f0;transform:scaleX(1.05);">0,3767</div>
<div class="t" style="left:1759.49px;top:802.83px;font-size:20.29px;color:#f0f0f0;transform:scaleX(1.05);">0,4077</div>
<div class="t" style="left:1860.29px;top:802.83px;font-size:20.29px;color:#f0f0f0;transform:scaleX(1.05);">0,1734</div>
<div style="position:absolute;left:376px;top:825.5px;width:1533px;height:29.6px;background:#424242"></div>
<div class="t" style="left:392.70px;top:833.53px;font-size:18.75px;color:#f0f0f0;font-weight:bold;transform:scaleX(1.0583);">Y</div>
<div class="t" style="left:564.99px;top:832.23px;font-size:20.29px;color:#f0f0f0;transform:scaleX(1.05);">508,2654</div>
<div class="t" style="left:664.89px;top:832.23px;font-size:20.29px;color:#f0f0f0;transform:scaleX(1.05);">408,8287</div>
<div class="t" style="left:765.39px;top:832.23px;font-size:20.29px;color:#f0f0f0;transform:scaleX(1.05);">331,6839</div>
<div class="t" style="left:865.39px;top:832.23px;font-size:20.29px;color:#f0f0f0;transform:scaleX(1.05);">257,6815</div>
<div class="t" style="left:965.28px;top:832.23px;font-size:20.29px;color:#f0f0f0;transform:scaleX(1.05);">181,8761</div>
<div class="t" style="left:1066.29px;top:832.23px;font-size:20.29px;color:#f0f0f0;transform:scaleX(1.05);">0,0031</div>
<div class="t" style="left:1142.49px;top:832.23px;font-size:20.29px;color:#f0f0f0;transform:scaleX(1.05);">56,8164</div>
<div class="t" style="left:1237.98px;top:832.23px;font-size:20.29px;color:#f0f0f0;transform:scaleX(1.05);">184,2655</div>
<div class="t" style="left:1338.09px;top:832.23px;font-size:20.29px;color:#f0f0f0;transform:scaleX(1.05);">97,7476</div>
<div class="t" style="left:1426.59px;top:832.23px;font-size:20.29px;color:#f0f0f0;transform:scaleX(1.05);">77,8450</div>
<div class="t" style="left:1514.28px;top:832.23px;font-size:20.29px;color:#f0f0f0;transform:scaleX(1.05);">122,4123</div>
<div class="t" style="left:1633.39px;top:832.23px;font-size:20.29px;color:#f0f0f0;transform:scaleX(1.05);">217,6828</div>
<div class="t" style="left:1758.78px;top:832.23px;font-size:20.29px;color:#f0f0f0;transform:scaleX(1.05);">150,2775</div>
<div class="t" style="left:1860.29px;top:832.23px;font-size:20.29px;color:#f0f0f0;transform:scaleX(1.05);">56,7240</div>
<div style="position:absolute;left:376px;top:854.9px;width:1533px;height:29.6px;background:#7f7f7f"></div>
<div style="position:absolute;left:376px;top:854.9px;width:1533px;height:1px;background:#8c8c8c"></div>
<div class="t" style="left:392.79px;top:862.93px;font-size:18.75px;color:#f0f0f0;font-weight:bold;transform:scaleX(1.1394);">Target x:CIE31</div>
<div class="t" style="left:564.99px;top:861.63px;font-size:20.29px;color:#f0f0f0;transform:scaleX(1.05);">0,3127</div>
<div class="t" style="left:664.49px;top:861.63px;font-size:20.29px;color:#f0f0f0;transform:scaleX(1.05);">0,3127</div>
<div class="t" style="left:765.29px;top:861.63px;font-size:20.29px;color:#f0f0f0;transform:scaleX(1.05);">0,3127</div>
<div class="t" style="left:865.59px;top:861.63px;font-size:20.29px;color:#f0f0f0;transform:scaleX(1.05);">0,3127</div>
<div class="t" style="left:965.99px;top:861.63px;font-size:20.29px;color:#f0f0f0;transform:scaleX(1.05);">0,3127</div>
<div class="t" style="left:1066.29px;top:861.63px;font-size:20.29px;color:#f0f0f0;transform:scaleX(1.05);">0,3127</div>
<div class="t" style="left:1142.49px;top:861.63px;font-size:20.29px;color:#f0f0f0;transform:scaleX(1.05);">0,4003</div>
<div class="t" style="left:1238.69px;top:861.63px;font-size:20.29px;color:#f0f0f0;transform:scaleX(1.05);">0,3795</div>
<div class="t" style="left:1338.19px;top:861.63px;font-size:20.29px;color:#f0f0f0;transform:scaleX(1.05);">0,2496</div>
<div class="t" style="left:1426.79px;top:861.63px;font-size:20.29px;color:#f0f0f0;transform:scaleX(1.05);">0,3395</div>
<div class="t" style="left:1514.99px;top:861.63px;font-size:20.29px;color:#f0f0f0;transform:scaleX(1.05);">0,2681</div>
<div class="t" style="left:1633.59px;top:861.63px;font-size:20.29px;color:#f0f0f0;transform:scaleX(1.05);">0,2626</div>
<div class="t" style="left:1759.49px;top:861.63px;font-size:20.29px;color:#f0f0f0;transform:scaleX(1.05);">0,5122</div>
<div class="t" style="left:1860.29px;top:861.63px;font-size:20.29px;color:#f0f0f0;transform:scaleX(1.05);">0,2164</div>
<div style="position:absolute;left:376px;top:884.3px;width:1533px;height:29.6px;background:#424242"></div>
<div class="t" style="left:392.79px;top:892.33px;font-size:18.75px;color:#f0f0f0;font-weight:bold;transform:scaleX(1.1394);">Target y:CIE31</div>
<div class="t" style="left:564.99px;top:891.03px;font-size:20.29px;color:#f0f0f0;transform:scaleX(1.05);">0,3290</div>
<div class="t" style="left:664.49px;top:891.03px;font-size:20.29px;color:#f0f0f0;transform:scaleX(1.05);">0,3290</div>
<div class="t" style="left:765.29px;top:891.03px;font-size:20.29px;color:#f0f0f0;transform:scaleX(1.05);">0,3290</div>
<div class="t" style="left:865.59px;top:891.03px;font-size:20.29px;color:#f0f0f0;transform:scaleX(1.05);">0,3290</div>
<div class="t" style="left:965.99px;top:891.03px;font-size:20.29px;color:#f0f0f0;transform:scaleX(1.05);">0,3290</div>
<div class="t" style="left:1066.29px;top:891.03px;font-size:20.29px;color:#f0f0f0;transform:scaleX(1.05);">0,3290</div>
<div class="t" style="left:1142.49px;top:891.03px;font-size:20.29px;color:#f0f0f0;transform:scaleX(1.05);">0,3642</div>
<div class="t" style="left:1238.69px;top:891.03px;font-size:20.29px;color:#f0f0f0;transform:scaleX(1.05);">0,3562</div>
<div class="t" style="left:1338.19px;top:891.03px;font-size:20.29px;color:#f0f0f0;transform:scaleX(1.05);">0,2656</div>
<div class="t" style="left:1426.79px;top:891.03px;font-size:20.29px;color:#f0f0f0;transform:scaleX(1.05);">0,4271</div>
<div class="t" style="left:1514.99px;top:891.03px;font-size:20.29px;color:#f0f0f0;transform:scaleX(1.05);">0,2525</div>
<div class="t" style="left:1633.59px;top:891.03px;font-size:20.29px;color:#f0f0f0;transform:scaleX(1.05);">0,3616</div>
<div class="t" style="left:1759.49px;top:891.03px;font-size:20.29px;color:#f0f0f0;transform:scaleX(1.05);">0,4063</div>
<div class="t" style="left:1860.29px;top:891.03px;font-size:20.29px;color:#f0f0f0;transform:scaleX(1.05);">0,1922</div>
<div style="position:absolute;left:376px;top:913.7px;width:1533px;height:29.6px;background:#7f7f7f"></div>
<div style="position:absolute;left:376px;top:913.7px;width:1533px;height:1px;background:#8c8c8c"></div>
<div class="t" style="left:392.78px;top:921.73px;font-size:18.75px;color:#f0f0f0;font-weight:bold;transform:scaleX(1.1753);">Target Y</div>
<div class="t" style="left:564.99px;top:920.43px;font-size:20.29px;color:#f0f0f0;transform:scaleX(1.05);">508,2654</div>
<div class="t" style="left:664.89px;top:920.43px;font-size:20.29px;color:#f0f0f0;transform:scaleX(1.05);">402,1894</div>
<div class="t" style="left:765.39px;top:920.43px;font-size:20.29px;color:#f0f0f0;transform:scaleX(1.05);">324,0684</div>
<div class="t" style="left:865.39px;top:920.43px;font-size:20.29px;color:#f0f0f0;transform:scaleX(1.05);">249,5689</div>
<div class="t" style="left:965.28px;top:920.43px;font-size:20.29px;color:#f0f0f0;transform:scaleX(1.05);">173,7833</div>
<div class="t" style="left:1066.29px;top:920.43px;font-size:20.29px;color:#f0f0f0;transform:scaleX(1.05);">0,0000</div>
<div class="t" style="left:1142.49px;top:920.43px;font-size:20.29px;color:#f0f0f0;transform:scaleX(1.05);">51,1991</div>
<div class="t" style="left:1237.98px;top:920.43px;font-size:20.29px;color:#f0f0f0;transform:scaleX(1.05);">177,3600</div>
<div class="t" style="left:1338.09px;top:920.43px;font-size:20.29px;color:#f0f0f0;transform:scaleX(1.05);">95,0374</div>
<div class="t" style="left:1426.59px;top:920.43px;font-size:20.29px;color:#f0f0f0;transform:scaleX(1.05);">66,2395</div>
<div class="t" style="left:1514.28px;top:920.43px;font-size:20.29px;color:#f0f0f0;transform:scaleX(1.05);">118,5198</div>
<div class="t" style="left:1633.39px;top:920.43px;font-size:20.29px;color:#f0f0f0;transform:scaleX(1.05);">212,8261</div>
<div class="t" style="left:1758.78px;top:920.43px;font-size:20.29px;color:#f0f0f0;transform:scaleX(1.05);">144,0822</div>
<div class="t" style="left:1860.29px;top:920.43px;font-size:20.29px;color:#f0f0f0;transform:scaleX(1.05);">59,7456</div>
<div style="position:absolute;left:376px;top:943.1px;width:1533px;height:29.6px;background:#424242"></div>
<div class="t" style="left:392.11px;top:951.13px;font-size:18.75px;color:#f0f0f0;font-weight:bold;transform:scaleX(1.1844);">ΔE 2000</div>
<div class="t" style="left:564.79px;top:949.83px;font-size:20.29px;color:#f0f0f0;transform:scaleX(1.05);">2,5750</div>
<div class="t" style="left:664.29px;top:949.83px;font-size:20.29px;color:#f0f0f0;transform:scaleX(1.05);">2,0053</div>
<div class="t" style="left:765.09px;top:949.83px;font-size:20.29px;color:#f0f0f0;transform:scaleX(1.05);">2,0907</div>
<div class="t" style="left:865.39px;top:949.83px;font-size:20.29px;color:#f0f0f0;transform:scaleX(1.05);">2,1264</div>
<div class="t" style="left:965.79px;top:949.83px;font-size:20.29px;color:#f0f0f0;transform:scaleX(1.05);">2,1705</div>
<div class="t" style="left:1066.29px;top:949.83px;font-size:20.29px;color:#f0f0f0;transform:scaleX(1.05);">0,0422</div>
<div class="t" style="left:1142.89px;top:949.83px;font-size:20.29px;color:#f0f0f0;transform:scaleX(1.05);">4,8787</div>
<div class="t" style="left:1238.79px;top:949.83px;font-size:20.29px;color:#f0f0f0;transform:scaleX(1.05);">3,1700</div>
<div class="t" style="left:1338.59px;top:949.83px;font-size:20.29px;color:#f0f0f0;transform:scaleX(1.05);">4,4319</div>
<div class="t" style="left:1426.59px;top:949.83px;font-size:20.29px;color:#f0f0f0;transform:scaleX(1.05);">6,2133</div>
<div class="t" style="left:1514.28px;top:949.83px;font-size:20.29px;color:#f0f0f0;transform:scaleX(1.05);">1,3476</div>
<div class="t" style="left:1633.59px;top:949.83px;font-size:20.29px;color:#f0f0f0;transform:scaleX(1.05);">5,9359</div>
<div class="t" style="left:1759.49px;top:949.83px;font-size:20.29px;color:#f0f0f0;transform:scaleX(1.05);">5,1310</div>
<div class="t" style="left:1860.09px;top:949.83px;font-size:20.29px;color:#f0f0f0;transform:scaleX(1.05);">2,4331</div>
<div class="t" style="left:582.39px;top:742.81px;font-size:19.48px;color:#f4f4f4;transform:scaleX(1.1128);">White</div>
<div class="t" style="left:674.45px;top:742.81px;font-size:19.48px;color:#f4f4f4;transform:scaleX(1.0224);">Gray 80</div>
<div class="t" style="left:774.86px;top:742.81px;font-size:19.48px;color:#f4f4f4;transform:scaleX(1.0120);">Gray 65</div>
<div class="t" style="left:875.15px;top:742.81px;font-size:19.48px;color:#f4f4f4;transform:scaleX(1.0224);">Gray 50</div>
<div class="t" style="left:975.56px;top:742.81px;font-size:19.48px;color:#f4f4f4;transform:scaleX(1.0120);">Gray 35</div>
<div class="t" style="left:1074.48px;top:742.81px;font-size:19.48px;color:#f4f4f4;transform:scaleX(1.0052);">Black</div>
<div class="t" style="left:1142.48px;top:742.81px;font-size:19.48px;color:#f4f4f4;transform:scaleX(1.0097);">Dark Skin</div>
<div class="t" style="left:1239.15px;top:742.81px;font-size:19.48px;color:#f4f4f4;transform:scaleX(1.0257);">Light Skin</div>
<div class="t" style="left:1339.05px;top:742.81px;font-size:19.48px;color:#f4f4f4;transform:scaleX(0.9937);">Blue Sky</div>
<div class="t" style="left:1432.91px;top:742.81px;font-size:19.48px;color:#f4f4f4;transform:scaleX(1.0236);">Foliage</div>
<div class="t" style="left:1514.97px;top:742.81px;font-size:19.48px;color:#f4f4f4;transform:scaleX(1.0457);">Blue Flower</div>
<div class="t" style="left:1633.19px;top:742.81px;font-size:19.48px;color:#f4f4f4;transform:scaleX(1.0360);">Bluish Green</div>
<div class="t" style="left:1771.61px;top:742.81px;font-size:19.48px;color:#f4f4f4;transform:scaleX(1.0205);">Orange</div>
<div class="t" style="left:1859.55px;top:742.81px;font-size:19.48px;color:#f4f4f4;transform:scaleX(0.9966);">Purplish Blue</div>
<div style="position:absolute;left:376px;top:973.4px;width:1533px;height:17.8px;background:#5c5c5c"></div>
<div style="position:absolute;left:400.5px;top:975px;width:668px;height:15px;background:#474747;border-radius:7.5px"></div>
<div style="position:absolute;left:377px;top:974.2px;width:19px;height:16.5px;background:#7c7c7c;border-radius:3px"></div>
<div class="a" style="left:382px;top:977.5px;width:0;height:0;border-top:5px solid transparent;border-bottom:5px solid transparent;border-right:7px solid #3a3a3a"></div>
<div style="position:absolute;left:1887.5px;top:974.2px;width:19.5px;height:16.5px;background:#7c7c7c;border-radius:3px"></div>
<div class="a" style="left:1894px;top:977.5px;width:0;height:0;border-top:5px solid transparent;border-bottom:5px solid transparent;border-left:7px solid #3a3a3a"></div></div>
<div style="position:absolute;left:1909px;top:734.5px;width:1px;height:257.5px;background:#111"></div>
<div style="position:absolute;left:0px;top:992px;width:1920px;height:52px;background:#2b2b2b"></div>
<div class="a" style="left:1.70px;top:997.3px;width:53.36px;height:47px;border-radius:3px 3px 0 0;background:linear-gradient(#8e8e8e,#777 30%,#5e5e5e 75%,#505050);border:1px solid #9a9a9a;border-bottom:none;"></div>
<div class="a" style="left:5.20px;top:1001px;width:46.36px;height:27.3px;border-radius:3px;background:#ffffff;box-shadow:0 0 1.5px 1px rgba(0,0,0,.35)"></div>
<div class="t" style="left:17.45px;top:1034.51px;font-size:8.14px;color:#2a2a2a;font-weight:bold;">White</div>
<div class="a" style="left:57.56px;top:997.3px;width:53.36px;height:47px;border-radius:3px 3px 0 0;background:linear-gradient(#8e8e8e,#777 30%,#5e5e5e 75%,#505050);border:1px solid #9a9a9a;border-bottom:none;"></div>
<div class="a" style="left:61.06px;top:1001px;width:46.36px;height:27.3px;border-radius:3px;background:#e6e6e6;box-shadow:0 0 1.5px 1px rgba(0,0,0,.35)"></div>
<div class="t" style="left:69.32px;top:1034.51px;font-size:8.14px;color:#2a2a2a;font-weight:bold;">Gray 80</div>
<div class="a" style="left:113.42px;top:997.3px;width:53.36px;height:47px;border-radius:3px 3px 0 0;background:linear-gradient(#8e8e8e,#777 30%,#5e5e5e 75%,#505050);border:1px solid #9a9a9a;border-bottom:none;"></div>
<div class="a" style="left:116.92px;top:1001px;width:46.36px;height:27.3px;border-radius:3px;background:#d0d0d0;box-shadow:0 0 1.5px 1px rgba(0,0,0,.35)"></div>
<div class="t" style="left:125.12px;top:1034.51px;font-size:8.14px;color:#2a2a2a;font-weight:bold;">Gray 65</div>
<div class="a" style="left:169.28px;top:997.3px;width:53.36px;height:47px;border-radius:3px 3px 0 0;background:linear-gradient(#8e8e8e,#777 30%,#5e5e5e 75%,#505050);border:1px solid #9a9a9a;border-bottom:none;"></div>
<div class="a" style="left:172.78px;top:1001px;width:46.36px;height:27.3px;border-radius:3px;background:#b6b6b6;box-shadow:0 0 1.5px 1px rgba(0,0,0,.35)"></div>
<div class="t" style="left:181.04px;top:1034.51px;font-size:8.14px;color:#2a2a2a;font-weight:bold;">Gray 50</div>
<div class="a" style="left:225.14px;top:997.3px;width:53.36px;height:47px;border-radius:3px 3px 0 0;background:linear-gradient(#8e8e8e,#777 30%,#5e5e5e 75%,#505050);border:1px solid #9a9a9a;border-bottom:none;"></div>
<div class="a" style="left:228.64px;top:1001px;width:46.36px;height:27.3px;border-radius:3px;background:#9e9e9e;box-shadow:0 0 1.5px 1px rgba(0,0,0,.35)"></div>
<div class="t" style="left:236.84px;top:1034.51px;font-size:8.14px;color:#2a2a2a;font-weight:bold;">Gray 35</div>
<div class="a" style="left:281.00px;top:997.3px;width:53.36px;height:47px;border-radius:3px 3px 0 0;background:linear-gradient(#8e8e8e,#777 30%,#5e5e5e 75%,#505050);border:1px solid #9a9a9a;border-bottom:none;"></div>
<div class="a" style="left:284.50px;top:1001px;width:46.36px;height:27.3px;border-radius:3px;background:#000000;box-shadow:0 0 1.5px 1px rgba(0,0,0,.35)"></div>
<div class="t" style="left:296.59px;top:1034.51px;font-size:8.14px;color:#2a2a2a;font-weight:bold;">Black</div>
<div class="a" style="left:336.86px;top:997.3px;width:53.36px;height:47px;border-radius:3px 3px 0 0;background:linear-gradient(#8e8e8e,#777 30%,#5e5e5e 75%,#505050);border:1px solid #9a9a9a;border-bottom:none;"></div>
<div class="a" style="left:340.36px;top:1001px;width:46.36px;height:27.3px;border-radius:3px;background:#735244;box-shadow:0 0 1.5px 1px rgba(0,0,0,.35)"></div>
<div class="t" style="left:344.76px;top:1034.51px;font-size:8.14px;color:#2a2a2a;font-weight:bold;">Dark Skin</div>
<div class="a" style="left:392.72px;top:997.3px;width:53.36px;height:47px;border-radius:3px 3px 0 0;background:linear-gradient(#8e8e8e,#777 30%,#5e5e5e 75%,#505050);border:1px solid #9a9a9a;border-bottom:none;"></div>
<div class="a" style="left:396.22px;top:1001px;width:46.36px;height:27.3px;border-radius:3px;background:#c29682;box-shadow:0 0 1.5px 1px rgba(0,0,0,.35)"></div>
<div class="t" style="left:399.74px;top:1034.51px;font-size:8.14px;color:#2a2a2a;font-weight:bold;">Light Skin</div>
<div class="a" style="left:448.58px;top:997.3px;width:53.36px;height:47px;border-radius:3px 3px 0 0;background:linear-gradient(#8e8e8e,#777 30%,#5e5e5e 75%,#505050);border:1px solid #9a9a9a;border-bottom:none;"></div>
<div class="a" style="left:452.08px;top:1001px;width:46.36px;height:27.3px;border-radius:3px;background:#5f7ba0;box-shadow:0 0 1.5px 1px rgba(0,0,0,.35)"></div>
<div class="t" style="left:457.84px;top:1034.51px;font-size:8.14px;color:#2a2a2a;font-weight:bold;">Blue Sky</div>
<div class="a" style="left:504.44px;top:997.3px;width:53.36px;height:47px;border-radius:3px 3px 0 0;background:linear-gradient(#8e8e8e,#777 30%,#5e5e5e 75%,#505050);border:1px solid #9a9a9a;border-bottom:none;"></div>
<div class="a" style="left:507.94px;top:1001px;width:46.36px;height:27.3px;border-radius:3px;background:#586a3c;box-shadow:0 0 1.5px 1px rgba(0,0,0,.35)"></div>
<div class="t" style="left:516.75px;top:1034.51px;font-size:8.14px;color:#2a2a2a;font-weight:bold;">Foliage</div>
<div class="a" style="left:560.30px;top:997.3px;width:53.36px;height:47px;border-radius:3px 3px 0 0;background:linear-gradient(#8e8e8e,#777 30%,#5e5e5e 75%,#505050);border:1px solid #9a9a9a;border-bottom:none;"></div>
<div class="a" style="left:563.80px;top:1001px;width:46.36px;height:27.3px;border-radius:3px;background:#8480b4;box-shadow:0 0 1.5px 1px rgba(0,0,0,.35)"></div>
<div class="t" style="left:563.72px;top:1034.51px;font-size:8.14px;color:#2a2a2a;font-weight:bold;">Blue Flower</div>
<div class="a" style="left:616.16px;top:997.3px;width:53.36px;height:47px;border-radius:3px 3px 0 0;background:linear-gradient(#8e8e8e,#777 30%,#5e5e5e 75%,#505050);border:1px solid #9a9a9a;border-bottom:none;"></div>
<div class="a" style="left:619.66px;top:1001px;width:46.36px;height:27.3px;border-radius:3px;background:#5ec4aa;box-shadow:0 0 1.5px 1px rgba(0,0,0,.35)"></div>
<div class="t" style="left:617.51px;top:1034.51px;font-size:8.14px;color:#2a2a2a;font-weight:bold;">Bluish Green</div>
<div class="a" style="left:672.02px;top:997.3px;width:53.36px;height:47px;border-radius:3px 3px 0 0;background:linear-gradient(#8e8e8e,#777 30%,#5e5e5e 75%,#505050);border:1px solid #9a9a9a;border-bottom:none;"></div>
<div class="a" style="left:675.52px;top:1001px;width:46.36px;height:27.3px;border-radius:3px;background:#e07828;box-shadow:0 0 1.5px 1px rgba(0,0,0,.35)"></div>
<div class="t" style="left:684.44px;top:1034.51px;font-size:8.14px;color:#2a2a2a;font-weight:bold;">Orange</div>
<div class="a" style="left:727.88px;top:997.3px;width:53.36px;height:47px;border-radius:3px 3px 0 0;background:linear-gradient(#8e8e8e,#777 30%,#5e5e5e 75%,#505050);border:1px solid #9a9a9a;border-bottom:none;"></div>
<div class="a" style="left:731.38px;top:1001px;width:46.36px;height:27.3px;border-radius:3px;background:#4a5ab0;box-shadow:0 0 1.5px 1px rgba(0,0,0,.35)"></div>
<div class="t" style="left:728.21px;top:1034.51px;font-size:8.14px;color:#2a2a2a;font-weight:bold;">Purplish Blue</div>
<div class="a" style="left:783.74px;top:997.3px;width:53.36px;height:47px;border-radius:3px 3px 0 0;background:linear-gradient(#8e8e8e,#777 30%,#5e5e5e 75%,#505050);border:1px solid #9a9a9a;border-bottom:none;"></div>
<div class="a" style="left:787.24px;top:1001px;width:46.36px;height:27.3px;border-radius:3px;background:#c85460;box-shadow:0 0 1.5px 1px rgba(0,0,0,.35)"></div>
<div class="t" style="left:783.54px;top:1034.51px;font-size:8.14px;color:#2a2a2a;font-weight:bold;">Moderate Red</div>
<div class="a" style="left:839.60px;top:997.3px;width:53.36px;height:47px;border-radius:3px 3px 0 0;background:linear-gradient(#8e8e8e,#777 30%,#5e5e5e 75%,#505050);border:1px solid #9a9a9a;border-bottom:none;"></div>
<div class="a" style="left:843.10px;top:1001px;width:46.36px;height:27.3px;border-radius:3px;background:#5e3a70;box-shadow:0 0 1.5px 1px rgba(0,0,0,.35)"></div>
<div class="t" style="left:853.50px;top:1034.51px;font-size:8.14px;color:#2a2a2a;font-weight:bold;">Purple</div>
<div class="a" style="left:895.46px;top:997.3px;width:53.36px;height:47px;border-radius:3px 3px 0 0;background:linear-gradient(#8e8e8e,#777 30%,#5e5e5e 75%,#505050);border:1px solid #9a9a9a;border-bottom:none;"></div>
<div class="a" style="left:898.96px;top:1001px;width:46.36px;height:27.3px;border-radius:3px;background:#a0c040;box-shadow:0 0 1.5px 1px rgba(0,0,0,.35)"></div>
<div class="t" style="left:896.79px;top:1034.51px;font-size:8.14px;color:#2a2a2a;font-weight:bold;">Yellow Green</div>
<div class="a" style="left:951.32px;top:997.3px;width:53.36px;height:47px;border-radius:3px 3px 0 0;background:linear-gradient(#8e8e8e,#777 30%,#5e5e5e 75%,#505050);border:1px solid #9a9a9a;border-bottom:none;"></div>
<div class="a" style="left:954.82px;top:1001px;width:46.36px;height:27.3px;border-radius:3px;background:#e8a030;box-shadow:0 0 1.5px 1px rgba(0,0,0,.35)"></div>
<div class="t" style="left:949.88px;top:1034.51px;font-size:8.14px;color:#2a2a2a;font-weight:bold;">Orange Yellow</div>
<div class="a" style="left:1007.18px;top:997.3px;width:53.36px;height:47px;border-radius:3px 3px 0 0;background:linear-gradient(#8e8e8e,#777 30%,#5e5e5e 75%,#505050);border:1px solid #9a9a9a;border-bottom:none;"></div>
<div class="a" style="left:1010.68px;top:1001px;width:46.36px;height:27.3px;border-radius:3px;background:#2a3a9a;box-shadow:0 0 1.5px 1px rgba(0,0,0,.35)"></div>
<div class="t" style="left:1024.93px;top:1034.51px;font-size:8.14px;color:#2a2a2a;font-weight:bold;">Blue</div>
<div class="a" style="left:1063.04px;top:997.3px;width:53.36px;height:47px;border-radius:3px 3px 0 0;background:linear-gradient(#8e8e8e,#777 30%,#5e5e5e 75%,#505050);border:1px solid #9a9a9a;border-bottom:none;"></div>
<div class="a" style="left:1066.54px;top:1001px;width:46.36px;height:27.3px;border-radius:3px;background:#3c9a48;box-shadow:0 0 1.5px 1px rgba(0,0,0,.35)"></div>
<div class="t" style="left:1078.06px;top:1034.51px;font-size:8.14px;color:#2a2a2a;font-weight:bold;">Green</div>
<div class="a" style="left:1118.90px;top:997.3px;width:53.36px;height:47px;border-radius:3px 3px 0 0;background:linear-gradient(#8e8e8e,#777 30%,#5e5e5e 75%,#505050);border:1px solid #9a9a9a;border-bottom:none;"></div>
<div class="a" style="left:1122.40px;top:1001px;width:46.36px;height:27.3px;border-radius:3px;background:#b82a32;box-shadow:0 0 1.5px 1px rgba(0,0,0,.35)"></div>
<div class="t" style="left:1137.91px;top:1034.51px;font-size:8.14px;color:#2a2a2a;font-weight:bold;">Red</div>
<div class="a" style="left:1174.76px;top:997.3px;width:53.36px;height:47px;border-radius:3px 3px 0 0;background:linear-gradient(#8e8e8e,#777 30%,#5e5e5e 75%,#505050);border:1px solid #9a9a9a;border-bottom:none;"></div>
<div class="a" style="left:1178.26px;top:1001px;width:46.36px;height:27.3px;border-radius:3px;background:#f0c818;box-shadow:0 0 1.5px 1px rgba(0,0,0,.35)"></div>
<div class="t" style="left:1188.72px;top:1034.51px;font-size:8.14px;color:#2a2a2a;font-weight:bold;">Yellow</div>
<div class="a" style="left:1230.62px;top:997.3px;width:53.36px;height:47px;border-radius:3px 3px 0 0;background:linear-gradient(#8e8e8e,#777 30%,#5e5e5e 75%,#505050);border:1px solid #9a9a9a;border-bottom:none;"></div>
<div class="a" style="left:1234.12px;top:1001px;width:46.36px;height:27.3px;border-radius:3px;background:#c04c98;box-shadow:0 0 1.5px 1px rgba(0,0,0,.35)"></div>
<div class="t" style="left:1240.51px;top:1034.51px;font-size:8.14px;color:#2a2a2a;font-weight:bold;">Magenta</div>
<div class="a" style="left:1286.48px;top:997.3px;width:53.36px;height:47px;border-radius:3px 3px 0 0;background:linear-gradient(#8e8e8e,#777 30%,#5e5e5e 75%,#505050);border:1px solid #9a9a9a;border-bottom:none;"></div>
<div class="a" style="left:1289.98px;top:1001px;width:46.36px;height:27.3px;border-radius:3px;background:#0888a8;box-shadow:0 0 1.5px 1px rgba(0,0,0,.35)"></div>
<div class="t" style="left:1303.31px;top:1034.51px;font-size:8.14px;color:#2a2a2a;font-weight:bold;">Cyan</div>
<div class="a" style="left:1342.34px;top:997.3px;width:53.36px;height:47px;border-radius:3px 3px 0 0;background:linear-gradient(#8e8e8e,#777 30%,#5e5e5e 75%,#505050);border:1px solid #9a9a9a;border-bottom:none;"></div>
<div class="a" style="left:1345.84px;top:1001px;width:46.36px;height:27.3px;border-radius:3px;background:#ff0000;box-shadow:0 0 1.5px 1px rgba(0,0,0,.35)"></div>
<div class="t" style="left:1349.83px;top:1034.51px;font-size:8.14px;color:#2a2a2a;font-weight:bold;">100% Red</div>
<div class="a" style="left:1398.20px;top:997.3px;width:53.36px;height:47px;border-radius:3px 3px 0 0;background:linear-gradient(#8e8e8e,#777 30%,#5e5e5e 75%,#505050);border:1px solid #9a9a9a;border-bottom:none;"></div>
<div class="a" style="left:1401.70px;top:1001px;width:46.36px;height:27.3px;border-radius:3px;background:#00ff00;box-shadow:0 0 1.5px 1px rgba(0,0,0,.35)"></div>
<div class="t" style="left:1401.60px;top:1034.51px;font-size:8.14px;color:#2a2a2a;font-weight:bold;">100% Green</div>
<div class="a" style="left:1454.06px;top:997.3px;width:53.36px;height:47px;border-radius:3px 3px 0 0;background:linear-gradient(#8e8e8e,#777 30%,#5e5e5e 75%,#505050);border:1px solid #9a9a9a;border-bottom:none;"></div>
<div class="a" style="left:1457.56px;top:1001px;width:46.36px;height:27.3px;border-radius:3px;background:#0000ff;box-shadow:0 0 1.5px 1px rgba(0,0,0,.35)"></div>
<div class="t" style="left:1460.29px;top:1034.51px;font-size:8.14px;color:#2a2a2a;font-weight:bold;">100% Blue</div>
<div class="a" style="left:1509.92px;top:997.3px;width:53.36px;height:47px;border-radius:3px 3px 0 0;background:linear-gradient(#8e8e8e,#777 30%,#5e5e5e 75%,#505050);border:1px solid #9a9a9a;border-bottom:none;"></div>
<div class="a" style="left:1513.42px;top:1001px;width:46.36px;height:27.3px;border-radius:3px;background:#00ffff;box-shadow:0 0 1.5px 1px rgba(0,0,0,.35)"></div>
<div class="t" style="left:1515.13px;top:1034.51px;font-size:8.14px;color:#2a2a2a;font-weight:bold;">100% Cyan</div>
<div class="a" style="left:1565.78px;top:997.3px;width:53.36px;height:47px;border-radius:3px 3px 0 0;background:linear-gradient(#8e8e8e,#777 30%,#5e5e5e 75%,#505050);border:1px solid #9a9a9a;border-bottom:none;"></div>
<div class="a" style="left:1569.28px;top:1001px;width:46.36px;height:19px;border-radius:3px;background:#ff00ff;box-shadow:0 0 1.5px 1px rgba(0,0,0,.35)"></div>
<div class="t" style="left:1581.92px;top:1025.51px;font-size:8.14px;color:#2a2a2a;font-weight:bold;">100%</div>
<div class="t" style="left:1575.67px;top:1034.51px;font-size:8.14px;color:#2a2a2a;font-weight:bold;">Magenta</div>
<div class="a" style="left:1621.64px;top:997.3px;width:53.36px;height:47px;border-radius:3px 3px 0 0;background:#232323;"></div>
<div class="a" style="left:1625.14px;top:1001px;width:46.36px;height:27.3px;border-radius:3px;background:#ffff00;box-shadow:0 0 1.5px 1px rgba(0,0,0,.35)"></div>
<div class="t" style="left:1624.52px;top:1033.47px;font-size:9.01px;color:#ffffff;font-weight:bold;transform:scaleX(0.8828);">100% Yellow</div>
<div class="a" style="left:1678px;top:997px;width:36px;height:47px;background:linear-gradient(#8a8a8a,#5a5a5a);border-radius:3px 3px 0 0"></div>
<div style="position:absolute;left:1678px;top:1011px;width:36px;height:1px;background:#4a4a4a"></div>
<div class="a" style="left:1688px;top:999px;width:14px;height:11px;border-radius:50%;background:#9a9a9a"></div>
<div class="a" style="left:1691px;top:1002px;width:0;height:0;border-left:4px solid transparent;border-right:4px solid transparent;border-bottom:4px solid #222"></div>
<div class="a" style="left:1684px;top:1016px;width:22px;height:24px;border-radius:3px;background:#9a9a9a;border:2px solid #222"></div>
<div style="position:absolute;left:1690px;top:1022.5px;width:11px;height:11px;background:#000"></div>
<div class="a" style="left:1714.0px;top:997px;width:33.3px;height:22px;background:linear-gradient(#8e8e8e,#6a6a6a);border-right:1px solid #555"></div>
<div class="a" style="left:1722.5px;top:999.5px;width:16px;height:16px;border-radius:50%;background:#7e7e7e"></div>
<div class="a" style="left:1747.8px;top:997px;width:33.3px;height:22px;background:linear-gradient(#8e8e8e,#6a6a6a);border-right:1px solid #555"></div>
<div class="a" style="left:1756.3px;top:999.5px;width:16px;height:16px;border-radius:50%;background:#7e7e7e"></div>
<div class="a" style="left:1781.6px;top:997px;width:33.3px;height:22px;background:linear-gradient(#8e8e8e,#6a6a6a);border-right:1px solid #555"></div>
<div class="a" style="left:1790.1px;top:999.5px;width:16px;height:16px;border-radius:50%;background:#7e7e7e"></div>
<div class="a" style="left:1815.4px;top:997px;width:33.3px;height:22px;background:linear-gradient(#8e8e8e,#6a6a6a);border-right:1px solid #555"></div>
<div class="a" style="left:1823.9px;top:999.5px;width:16px;height:16px;border-radius:50%;background:#7e7e7e"></div>
<div class="a" style="left:1849.2px;top:997px;width:33.3px;height:22px;background:linear-gradient(#3a3a3a,#2a2a2a);border-right:1px solid #555"></div>
<div class="a" style="left:1857.7px;top:999.5px;width:16px;height:16px;border-radius:50%;background:#2e2e2e"></div>
<div class="a" style="left:1883.0px;top:997px;width:33.3px;height:22px;background:linear-gradient(#3a3a3a,#2a2a2a);border-right:1px solid #555"></div>
<div class="a" style="left:1891.5px;top:999.5px;width:16px;height:16px;border-radius:50%;background:#2e2e2e"></div>
<div style="position:absolute;left:1731px;top:1005px;width:6px;height:6px;background:#2a2a2a"></div>
<div class="a" style="left:1765px;top:1004px;width:0;height:0;border-top:4px solid transparent;border-bottom:4px solid transparent;border-left:6px solid #2a2a2a"></div>
<div class="t" style="left:1792.51px;top:1005.13px;font-size:7.99px;color:#333;transform:scaleX(0.8809);">[↔]</div>
<div class="t" style="left:1825.30px;top:1005.52px;font-size:8.72px;color:#333;transform:scaleX(2.0021);">∞</div>
<div class="a" style="left:1715px;top:1020.6px;width:202px;height:23.4px;background:linear-gradient(#f0f0f0,#c4c4c4 45%,#a6a6a6);border-radius:3px 3px 0 0"></div>
<div style="position:absolute;left:1816px;top:1020.6px;width:1px;height:23.4px;background:#8a8a8a"></div>
<div class="a" style="left:1730.5px;top:1024.5px;width:14px;height:14px;border-radius:50%;background:radial-gradient(#bdbdbd,#d8d8d8)"></div>
<div class="t" style="left:1732.73px;top:1027.17px;font-size:10.90px;color:#444;font-weight:bold;transform:scaleX(1.5614);">«</div>
<div class="t" style="left:1756.97px;top:1024.67px;font-size:16.57px;color:#333;font-weight:bold;transform:scaleX(0.9604);">Back</div>
<div class="t" style="left:1836.80px;top:1024.67px;font-size:16.57px;color:#333;font-weight:bold;transform:scaleX(1.1117);">Next</div>
<div class="a" style="left:1891px;top:1024.5px;width:14px;height:14px;border-radius:50%;background:radial-gradient(#bdbdbd,#d8d8d8)"></div>
<div class="t" style="left:1893.23px;top:1027.17px;font-size:10.90px;color:#444;font-weight:bold;transform:scaleX(1.5614);">»</div>
<div style="position:absolute;left:1752.5px;top:1013.8px;width:66.7px;height:17.1px;background:#fafafa;border:1px solid #c8c8c8"></div>
<div class="t" style="left:1757.26px;top:1019.41px;font-size:8.14px;color:#4a4a4a;transform:scaleX(0.9832);">Previous Layout</div>
<div style="position:absolute;left:1916px;top:66px;width:4px;height:926px;background:#2a2a2a"></div></body></html>
